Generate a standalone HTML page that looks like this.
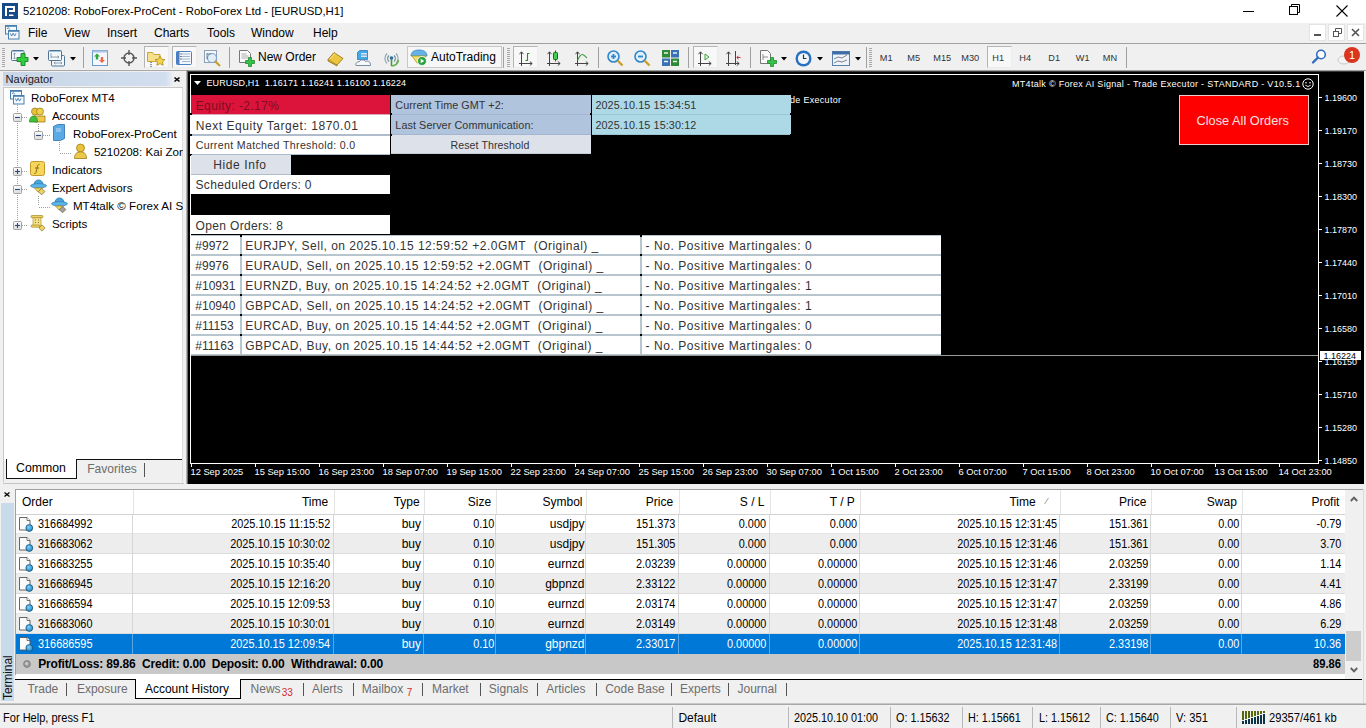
<!DOCTYPE html>
<html><head><meta charset="utf-8">
<style>
*{margin:0;padding:0;box-sizing:border-box}
html,body{width:1366px;height:728px;overflow:hidden;background:#f0f0f0;font-family:"Liberation Sans",sans-serif;font-size:12px;color:#000;position:relative}
.a{position:absolute}
.t{position:absolute;white-space:nowrap;line-height:1}
svg{position:absolute;overflow:visible}
</style></head><body>
<div class="a" style="left:0px;top:0px;width:1366px;height:23px;background:#fff;"></div>
<svg style="left:2px;top:3px" width="16" height="16" viewBox="0 0 16 16"><rect x="0" y="0" width="16" height="16" fill="#184a88"/><path d="M3 3h10v6H7V7h4V5H5v8H3z" fill="#fff"/><path d="M7 11.4h4l.8 1.6H7z" fill="#fff"/></svg>
<div class="t" style="left:23px;top:6.35px;font-size:11.4px;color:#000;">5210208: RoboForex-ProCent - RoboForex Ltd - [EURUSD,H1]</div>
<div class="a" style="left:1243px;top:11px;width:11px;height:1px;background:#000;"></div>
<svg style="left:1289px;top:4px" width="12" height="12" viewBox="0 0 12 12">
<rect x="0.5" y="2.5" width="8" height="8" fill="none" stroke="#000"/>
<path d="M2.5 2.5V0.5h8v8h-2" fill="none" stroke="#000"/></svg>
<svg style="left:1336px;top:5px" width="12" height="12" viewBox="0 0 12 12">
<path d="M0.5 0.5L11.5 11.5M11.5 0.5L0.5 11.5" stroke="#000" stroke-width="1.1"/></svg>
<div class="a" style="left:0px;top:23px;width:1366px;height:20px;background:#f0f0f0;"></div>
<div class="a" style="left:0px;top:43px;width:1366px;height:1px;background:#a0a0a0;"></div>
<svg style="left:5px;top:25px" width="15" height="15" viewBox="0 0 15 15"><rect x="0.5" y="0.5" width="11" height="8.5" fill="#f4f9fd" stroke="#4a7fae"/><path d="M0.5 1h11" stroke="#4a7fae" stroke-width="1.6"/><path d="M2 4l1.3-1.5 1.5 2" fill="none" stroke="#4a7fae" stroke-width="0.9"/><rect x="3.5" y="5.5" width="10.5" height="8.5" fill="#f4f9fd" stroke="#4a7fae"/><path d="M3.5 6h10.5" stroke="#4a7fae" stroke-width="1.6"/><path d="M5.3 8.3l1.3 2.8 1.5-3 1.5 3 1.4-2.8" fill="none" stroke="#4a7fae" stroke-width="0.9"/></svg>
<div class="t" style="left:28px;top:26.84px;font-size:12px;color:#000;">File</div>
<div class="t" style="left:64px;top:26.84px;font-size:12px;color:#000;">View</div>
<div class="t" style="left:107px;top:26.84px;font-size:12px;color:#000;">Insert</div>
<div class="t" style="left:154px;top:26.84px;font-size:12px;color:#000;">Charts</div>
<div class="t" style="left:207px;top:26.84px;font-size:12px;color:#000;">Tools</div>
<div class="t" style="left:251px;top:26.84px;font-size:12px;color:#000;">Window</div>
<div class="t" style="left:313px;top:26.84px;font-size:12px;color:#000;">Help</div>
<div class="a" style="left:1309px;top:24px;width:17px;height:17px;background:#fff;border:1px solid #e3e3e3"></div>
<div class="a" style="left:1328px;top:24px;width:17px;height:17px;background:#fff;border:1px solid #e3e3e3"></div>
<div class="a" style="left:1347px;top:24px;width:17px;height:17px;background:#fff;border:1px solid #e3e3e3"></div>
<div class="a" style="left:1314px;top:34px;width:7px;height:2px;background:#555;"></div>
<svg style="left:1333px;top:28px" width="9" height="9" viewBox="0 0 9 9">
<rect x="0.5" y="3.5" width="5" height="5" fill="none" stroke="#555"/>
<path d="M2.5 3.5V0.5h6v5h-3" fill="none" stroke="#555"/></svg>
<svg style="left:1351px;top:28px" width="9" height="9" viewBox="0 0 9 9">
<path d="M1 1L8 8M8 1L1 8" stroke="#555" stroke-width="1.6"/></svg>
<div class="a" style="left:0px;top:44px;width:1366px;height:26px;background:#f0f0f0;"></div>
<svg style="left:2px;top:48px" width="3" height="20"><rect x="0" y="0" width="3" height="1" fill="#a8a8a8"/><rect x="0" y="2" width="3" height="1" fill="#a8a8a8"/><rect x="0" y="4" width="3" height="1" fill="#a8a8a8"/><rect x="0" y="6" width="3" height="1" fill="#a8a8a8"/><rect x="0" y="8" width="3" height="1" fill="#a8a8a8"/><rect x="0" y="10" width="3" height="1" fill="#a8a8a8"/><rect x="0" y="12" width="3" height="1" fill="#a8a8a8"/><rect x="0" y="14" width="3" height="1" fill="#a8a8a8"/><rect x="0" y="16" width="3" height="1" fill="#a8a8a8"/><rect x="0" y="18" width="3" height="1" fill="#a8a8a8"/></svg>
<svg style="left:11px;top:50px" width="18" height="16" viewBox="0 0 18 16"><rect x="0.5" y="0.5" width="12.5" height="10" rx="1" fill="#f2f8fc" stroke="#4f7394"/><path d="M1 1.5h11.5" stroke="#9fc0dc"/><path d="M3.5 3v6M2.3 4.2l1.2-1.2 1.2 1.2M2.3 7.8l1.2 1.2 1.2-1.2" fill="none" stroke="#7a8a9a" stroke-width="0.8"/><path d="M10 3.5h4v4h3v4h-3v4h-4v-4H6v-4h4z" fill="#2fd040" stroke="#1a7a22" stroke-width="0.9"/></svg>
<svg style="left:33px;top:57px" width="6" height="4"><path d="M0 0h6L3 3.5z" fill="#000"/></svg>
<svg style="left:48px;top:50px" width="18" height="17" viewBox="0 0 18 17"><rect x="3.5" y="5.5" width="13" height="10.5" rx="1" fill="#f2f8fc" stroke="#4f7394"/><rect x="0.5" y="0.5" width="13" height="10" rx="1" fill="#f2f8fc" stroke="#4f7394"/><path d="M1 1.5h12" stroke="#9fc0dc"/><path d="M3 3v5M3 7h8M9.5 5.8l1.5 1.2-1.5 1.2M6 13h8M7.3 11.8L6 13l1.3 1.2M12.7 11.8L14 13l-1.3 1.2" fill="none" stroke="#7a8a9a" stroke-width="0.8"/></svg>
<svg style="left:70px;top:57px" width="6" height="4"><path d="M0 0h6L3 3.5z" fill="#000"/></svg>
<div class="a" style="left:83px;top:47px;width:1px;height:21px;background:#a0a0a0;"></div>
<svg style="left:92px;top:50px" width="16" height="16" viewBox="0 0 16 16"><rect x="0.5" y="0.5" width="15" height="15" fill="#f4f8fc" stroke="#6a9bd0"/><rect x="0.5" y="0.5" width="15" height="2" fill="#a9c6e6"/><path d="M5 3.5l3 3H6.2v3H3.8v-3H2z" fill="#2fa83a"/><path d="M10 13l3-3h-1.8V7H8.8v3H7z" fill="#e9694a"/></svg>
<svg style="left:121px;top:50px" width="16" height="16" viewBox="0 0 16 16"><circle cx="8" cy="8" r="5" fill="none" stroke="#555" stroke-width="1.4"/><path d="M8 0v5M8 11v5M0 8h5M11 8h5" stroke="#555" stroke-width="1.4"/></svg>
<div class="a" style="left:144px;top:46px;width:25px;height:22px;background:#f8f8f8;border-left:1px solid #b4b4b4;border-top:1px solid #b4b4b4;border-right:1px solid #ececec;border-bottom:1px solid #ececec"></div>
<svg style="left:147px;top:50px" width="19" height="17" viewBox="0 0 19 17"><path d="M0.5 2.5h5l1.5 2h6v7h-12.5z" fill="#f7e08c" stroke="#c9a53a"/><path d="M13 6l1.6 3.2 3.4.4-2.5 2.3.7 3.4-3.2-1.7-3.2 1.7.7-3.4-2.5-2.3 3.4-.4z" fill="#f2d54a" stroke="#b08a1a" stroke-width="0.8"/><path d="M4 12v5" stroke="#333" stroke-dasharray="1 1"/></svg>
<div class="a" style="left:172px;top:46px;width:25px;height:22px;background:#f8f8f8;border-left:1px solid #b4b4b4;border-top:1px solid #b4b4b4;border-right:1px solid #ececec;border-bottom:1px solid #ececec"></div>
<svg style="left:176px;top:51px" width="16" height="14" viewBox="0 0 16 14"><rect x="0.5" y="0.5" width="15" height="13" rx="1" fill="#f4f8fc" stroke="#4a7fc1"/><rect x="0.5" y="0.5" width="3" height="13" fill="#4a7fc1"/><path d="M6 3h8M6 5.5h8M6 8h8M6 10.5h8" stroke="#8aa6c8" stroke-width="0.8"/><path d="M4.5 3h1M4.5 5.5h1M4.5 8h1" stroke="#000"/></svg>
<svg style="left:204px;top:50px" width="18" height="18" viewBox="0 0 18 18"><rect x="0.5" y="0.5" width="12" height="12" fill="#f4f8fc" stroke="#8aa0b8"/><circle cx="8" cy="8" r="4.5" fill="#dce9f5" fill-opacity="0.7" stroke="#7ea3cc" stroke-width="1.2"/><path d="M11 11l5 5" stroke="#c9a030" stroke-width="2.2"/><path d="M3 3v6M3 4h4" stroke="#53677f" stroke-width="0.8"/></svg>
<div class="a" style="left:229px;top:47px;width:1px;height:21px;background:#a0a0a0;"></div>
<svg style="left:239px;top:50px" width="17" height="17" viewBox="0 0 17 17"><path d="M0.5 0.5h8l3 3v9h-11z" fill="#fafafa" stroke="#777"/><path d="M2.5 4h5M2.5 6h7M2.5 8h7" stroke="#999" stroke-width="0.8"/><path d="M10 8h3v3h3v3h-3v3h-3v-3H7v-3h3z" transform="translate(-0.5,-0.5)" fill="#36c24a" stroke="#1f8a2e" stroke-width="0.8"/></svg>
<div class="t" style="left:258px;top:50.84px;font-size:12px;color:#000;">New Order</div>
<svg style="left:327px;top:51px" width="17" height="15" viewBox="0 0 17 15"><path d="M1 8.5L7 1.5l9 6-6 6.5z" fill="#ecc640" stroke="#9a7a1a" stroke-width="0.9"/><path d="M1 8.5v1.5l9 5v-1" fill="#c8a028" stroke="#9a7a1a" stroke-width="0.8"/><path d="M3 8l5-5.5" stroke="#f8e08a" stroke-width="1"/></svg>
<svg style="left:355px;top:50px" width="17" height="16" viewBox="0 0 17 16"><path d="M2.5 2.5l2-2h8v9h-10z" fill="#47a8e8" stroke="#2a78c0" stroke-width="0.8"/><rect x="6" y="3" width="6" height="4" fill="#cfe8fb"/><path d="M6 5h6" stroke="#2a78c0" stroke-width="0.7"/><path d="M1 15.5c-1-2 1-4 3-3.5 1-2.5 5-3 6.5-.5 2-1 5.5 0 5 4z" fill="#f6f8fa" stroke="#6a7f98" stroke-width="0.9"/></svg>
<svg style="left:383px;top:50px" width="17" height="17" viewBox="0 0 17 17"><path d="M4 3.5A7 7 0 0 0 4 13.5M13 3.5A7 7 0 0 1 13 13.5" fill="none" stroke="#8aa0b0" stroke-width="1.1"/><path d="M6 5.5A4 4 0 0 0 6 11.5M11 5.5A4 4 0 0 1 11 11.5" fill="none" stroke="#6a8aa0" stroke-width="1.1"/><path d="M15.5 10A7.5 7.5 0 0 1 8.5 16" fill="none" stroke="#6ab04a" stroke-width="1.6"/><circle cx="8.5" cy="8" r="1.8" fill="#2c6f9a"/><path d="M8.5 9v7" stroke="#4a9a3a" stroke-width="1.6"/></svg>
<div class="a" style="left:407px;top:46px;width:95px;height:22px;background:#f7f7f7;border:1px solid #c8c8c8"></div>
<svg style="left:410px;top:49px" width="18" height="17" viewBox="0 0 18 17"><path d="M1 7c0-4 3-6 8-6s8 2 8 6z" fill="#63b3e8" stroke="#3f86c0" stroke-width="0.8"/><path d="M2 7h14l-5 7H7z" fill="#f3dd6b" stroke="#b39a2a" stroke-width="0.8"/><circle cx="12" cy="12" r="4.5" fill="#2aa040" stroke="#fff" stroke-width="0.8"/><path d="M10.7 9.8v4.4l3.6-2.2z" fill="#fff"/></svg>
<div class="t" style="left:431px;top:50.84px;font-size:12px;color:#000;">AutoTrading</div>
<div class="a" style="left:503px;top:47px;width:1px;height:21px;background:#a0a0a0;"></div>
<svg style="left:507px;top:48px" width="3" height="20"><rect x="0" y="0" width="3" height="1" fill="#a8a8a8"/><rect x="0" y="2" width="3" height="1" fill="#a8a8a8"/><rect x="0" y="4" width="3" height="1" fill="#a8a8a8"/><rect x="0" y="6" width="3" height="1" fill="#a8a8a8"/><rect x="0" y="8" width="3" height="1" fill="#a8a8a8"/><rect x="0" y="10" width="3" height="1" fill="#a8a8a8"/><rect x="0" y="12" width="3" height="1" fill="#a8a8a8"/><rect x="0" y="14" width="3" height="1" fill="#a8a8a8"/><rect x="0" y="16" width="3" height="1" fill="#a8a8a8"/><rect x="0" y="18" width="3" height="1" fill="#a8a8a8"/></svg>
<div class="a" style="left:513px;top:46px;width:25px;height:22px;background:#f8f8f8;border-left:1px solid #b4b4b4;border-top:1px solid #b4b4b4;border-right:1px solid #ececec;border-bottom:1px solid #ececec"></div>
<svg style="left:518px;top:50px" width="16" height="17" viewBox="0 0 16 17"><path d="M3.5 2v14M1 13.5h13" stroke="#444" stroke-width="1"/><path d="M1.5 4.2L3.5 1.8 5.5 4.2M11.8 11.5l2.4 2-2.4 2" fill="none" stroke="#444" stroke-width="1"/><path d="M9.5 3v8M7.5 10.5h2M9.5 3.5h2" stroke="#2a8a2a" stroke-width="1.1"/></svg>
<svg style="left:546px;top:50px" width="16" height="17" viewBox="0 0 16 17"><path d="M3.5 2v14M1 13.5h13" stroke="#444" stroke-width="1"/><path d="M1.5 4.2L3.5 1.8 5.5 4.2M11.8 11.5l2.4 2-2.4 2" fill="none" stroke="#444" stroke-width="1"/><path d="M9.5 0.5v11" stroke="#1a6a1a"/><rect x="7.5" y="2.5" width="4" height="7" rx="0.8" fill="#3ad050" stroke="#1a6a1a"/></svg>
<svg style="left:574px;top:50px" width="16" height="17" viewBox="0 0 16 17"><path d="M3.5 2v14M1 13.5h13" stroke="#444" stroke-width="1"/><path d="M1.5 4.2L3.5 1.8 5.5 4.2M11.8 11.5l2.4 2-2.4 2" fill="none" stroke="#444" stroke-width="1"/><path d="M3.5 10.5C5 7 7 4.5 8.5 4.5S11.5 7 13 8" fill="none" stroke="#3a9a3a" stroke-width="1.1"/></svg>
<div class="a" style="left:598px;top:47px;width:1px;height:21px;background:#a0a0a0;"></div>
<svg style="left:607px;top:50px" width="17" height="17" viewBox="0 0 17 17"><circle cx="6.5" cy="6.5" r="5.5" fill="#dff0fb" stroke="#2f86c8" stroke-width="1.6"/><path d="M10.5 10.5l5 5" stroke="#c9a030" stroke-width="2.4"/><path d="M4 6.5h5" stroke="#2f86c8" stroke-width="1.8"/><path d="M6.5 4v5" stroke="#2f86c8" stroke-width="1.8"/></svg>
<svg style="left:634px;top:50px" width="17" height="17" viewBox="0 0 17 17"><circle cx="6.5" cy="6.5" r="5.5" fill="#dff0fb" stroke="#2f86c8" stroke-width="1.6"/><path d="M10.5 10.5l5 5" stroke="#c9a030" stroke-width="2.4"/><path d="M4 6.5h5" stroke="#2f86c8" stroke-width="1.8"/></svg>
<svg style="left:662px;top:50px" width="17" height="16" viewBox="0 0 17 16"><rect x="0" y="0" width="8" height="7.5" fill="#2f8a3a"/><rect x="9" y="0" width="8" height="7.5" fill="#3a72b8"/><rect x="0" y="8.5" width="8" height="7.5" fill="#3a72b8"/><rect x="9" y="8.5" width="8" height="7.5" fill="#2f8a3a"/><path d="M2 3h4M11 3h4M2 11.5h4M11 11.5h4" stroke="#e8f4e8" stroke-width="1.4"/></svg>
<div class="a" style="left:688px;top:47px;width:1px;height:21px;background:#a0a0a0;"></div>
<div class="a" style="left:693px;top:46px;width:25px;height:22px;background:#f8f8f8;border-left:1px solid #b4b4b4;border-top:1px solid #b4b4b4;border-right:1px solid #ececec;border-bottom:1px solid #ececec"></div>
<svg style="left:697px;top:50px" width="16" height="17" viewBox="0 0 16 17"><path d="M3.5 2v14M1 13.5h13" stroke="#444" stroke-width="1"/><path d="M1.5 4.2L3.5 1.8 5.5 4.2M11.8 11.5l2.4 2-2.4 2" fill="none" stroke="#444" stroke-width="1"/><path d="M8 4v6l4-3z" fill="#e8f8e8" stroke="#2a9a2a" stroke-width="0.9"/></svg>
<svg style="left:725px;top:50px" width="16" height="17" viewBox="0 0 16 17"><path d="M3.5 2v14M1 13.5h13" stroke="#444" stroke-width="1"/><path d="M1.5 4.2L3.5 1.8 5.5 4.2M11.8 11.5l2.4 2-2.4 2" fill="none" stroke="#444" stroke-width="1"/><path d="M10.5 1v14" stroke="#444"/><path d="M15.5 7.5H12M13.5 5.8L11.8 7.5l1.7 1.7" fill="none" stroke="#c03030" stroke-width="1"/></svg>
<div class="a" style="left:750px;top:47px;width:1px;height:21px;background:#a0a0a0;"></div>
<svg style="left:760px;top:50px" width="17" height="17" viewBox="0 0 17 17"><path d="M0.5 0.5h7l3 3v10h-10z" fill="#fafafa" stroke="#777"/><path d="M3 4v6M3 7h5" stroke="#777" stroke-width="0.8"/><path d="M10 8h3v3h3v3h-3v3h-3v-3H7v-3h3z" transform="translate(0.5,-0.5)" fill="#36c24a" stroke="#1f8a2e" stroke-width="0.8"/></svg>
<svg style="left:781px;top:57px" width="6" height="4"><path d="M0 0h6L3 3.5z" fill="#000"/></svg>
<svg style="left:795px;top:50px" width="17" height="17" viewBox="0 0 17 17"><circle cx="8.5" cy="8.5" r="8" fill="#2a6fc0"/><circle cx="8.5" cy="8.5" r="5.6" fill="#f2f6fb"/><path d="M8.5 4.5v4h3" fill="none" stroke="#333" stroke-width="1.2"/></svg>
<svg style="left:817px;top:57px" width="6" height="4"><path d="M0 0h6L3 3.5z" fill="#000"/></svg>
<svg style="left:832px;top:51px" width="18" height="15" viewBox="0 0 18 15"><rect x="0.5" y="0.5" width="17" height="14" fill="#eef4fb" stroke="#5a7fa8"/><rect x="0.5" y="0.5" width="17" height="3" fill="#3f6fa8"/><path d="M2 8l4-2 4 1 5-3M2 12l4-2 4 1 5-2" fill="none" stroke="#666" stroke-width="0.8"/></svg>
<svg style="left:855px;top:57px" width="6" height="4"><path d="M0 0h6L3 3.5z" fill="#000"/></svg>
<div class="a" style="left:866px;top:47px;width:1px;height:21px;background:#a0a0a0;"></div>
<svg style="left:869px;top:48px" width="3" height="20"><rect x="0" y="0" width="3" height="1" fill="#a8a8a8"/><rect x="0" y="2" width="3" height="1" fill="#a8a8a8"/><rect x="0" y="4" width="3" height="1" fill="#a8a8a8"/><rect x="0" y="6" width="3" height="1" fill="#a8a8a8"/><rect x="0" y="8" width="3" height="1" fill="#a8a8a8"/><rect x="0" y="10" width="3" height="1" fill="#a8a8a8"/><rect x="0" y="12" width="3" height="1" fill="#a8a8a8"/><rect x="0" y="14" width="3" height="1" fill="#a8a8a8"/><rect x="0" y="16" width="3" height="1" fill="#a8a8a8"/><rect x="0" y="18" width="3" height="1" fill="#a8a8a8"/></svg>
<div class="t" style="left:879.8px;top:54.21px;font-size:9.2px;color:#333;">M1</div>
<div class="t" style="left:907.3px;top:54.21px;font-size:9.2px;color:#333;">M5</div>
<div class="t" style="left:933.3px;top:54.21px;font-size:9.2px;color:#333;">M15</div>
<div class="t" style="left:961.3px;top:54.21px;font-size:9.2px;color:#333;">M30</div>
<div class="t" style="left:1019.3px;top:54.21px;font-size:9.2px;color:#333;">H4</div>
<div class="t" style="left:1048.3px;top:54.21px;font-size:9.2px;color:#333;">D1</div>
<div class="t" style="left:1075.8px;top:54.21px;font-size:9.2px;color:#333;">W1</div>
<div class="t" style="left:1102.8px;top:54.21px;font-size:9.2px;color:#333;">MN</div>
<div class="a" style="left:987px;top:46px;width:25px;height:22px;background:#f8f8f8;border-left:1px solid #b4b4b4;border-top:1px solid #b4b4b4;border-right:1px solid #ececec;border-bottom:1px solid #ececec"></div>
<div class="t" style="left:992.3px;top:54.21px;font-size:9.2px;color:#333;">H1</div>
<div class="a" style="left:1126px;top:47px;width:1px;height:21px;background:#a0a0a0;"></div>
<svg style="left:1312px;top:49px" width="15" height="15" viewBox="0 0 15 15"><circle cx="9" cy="5.5" r="4.3" fill="#fff" stroke="#2f6cc0" stroke-width="1.6"/><path d="M6 8.5L1 13.5" stroke="#2f6cc0" stroke-width="2.4" stroke-linecap="round"/></svg>
<svg style="left:1336px;top:46px" width="26" height="20" viewBox="0 0 26 20"><ellipse cx="8" cy="14" rx="6" ry="4" fill="#f4f4f4" stroke="#c8c8c8"/><circle cx="16" cy="9" r="8" fill="#d9351f"/><text x="16" y="13" font-size="11" font-family="Liberation Sans" fill="#fff" text-anchor="middle">1</text></svg>
<div class="a" style="left:0px;top:70px;width:1366px;height:1px;background:#a8a8a8;"></div>
<div class="a" style="left:0px;top:71px;width:188px;height:413px;background:#f0f0f0;"></div>
<div class="a" style="left:3px;top:72px;width:181px;height:14px;background:linear-gradient(to right,#c9d6e6 0%,#cfdcec 60%,#d2def0 90%,#eef0f2 94%,#f0f0f0 100%)"></div>
<div class="t" style="left:5.5px;top:73.60px;font-size:11.1px;color:#1a1a1a;">Navigator</div>
<svg style="left:174px;top:77px" width="6" height="5" viewBox="0 0 6 5"><path d="M0.5 0.5l5 4M5.5 0.5l-5 4" stroke="#000" stroke-width="1.6"/></svg>
<div class="a" style="left:3px;top:87px;width:180px;height:395px;background:#fff;border:1px solid #c8c8c8;border-right:1px solid #dcdcdc"></div>
<svg style="left:17px;top:105px" width="1" height="117"><rect x="0" y="0" width="1" height="1" fill="#a0a0a0"/><rect x="0" y="2" width="1" height="1" fill="#a0a0a0"/><rect x="0" y="4" width="1" height="1" fill="#a0a0a0"/><rect x="0" y="6" width="1" height="1" fill="#a0a0a0"/><rect x="0" y="8" width="1" height="1" fill="#a0a0a0"/><rect x="0" y="10" width="1" height="1" fill="#a0a0a0"/><rect x="0" y="12" width="1" height="1" fill="#a0a0a0"/><rect x="0" y="14" width="1" height="1" fill="#a0a0a0"/><rect x="0" y="16" width="1" height="1" fill="#a0a0a0"/><rect x="0" y="18" width="1" height="1" fill="#a0a0a0"/><rect x="0" y="20" width="1" height="1" fill="#a0a0a0"/><rect x="0" y="22" width="1" height="1" fill="#a0a0a0"/><rect x="0" y="24" width="1" height="1" fill="#a0a0a0"/><rect x="0" y="26" width="1" height="1" fill="#a0a0a0"/><rect x="0" y="28" width="1" height="1" fill="#a0a0a0"/><rect x="0" y="30" width="1" height="1" fill="#a0a0a0"/><rect x="0" y="32" width="1" height="1" fill="#a0a0a0"/><rect x="0" y="34" width="1" height="1" fill="#a0a0a0"/><rect x="0" y="36" width="1" height="1" fill="#a0a0a0"/><rect x="0" y="38" width="1" height="1" fill="#a0a0a0"/><rect x="0" y="40" width="1" height="1" fill="#a0a0a0"/><rect x="0" y="42" width="1" height="1" fill="#a0a0a0"/><rect x="0" y="44" width="1" height="1" fill="#a0a0a0"/><rect x="0" y="46" width="1" height="1" fill="#a0a0a0"/><rect x="0" y="48" width="1" height="1" fill="#a0a0a0"/><rect x="0" y="50" width="1" height="1" fill="#a0a0a0"/><rect x="0" y="52" width="1" height="1" fill="#a0a0a0"/><rect x="0" y="54" width="1" height="1" fill="#a0a0a0"/><rect x="0" y="56" width="1" height="1" fill="#a0a0a0"/><rect x="0" y="58" width="1" height="1" fill="#a0a0a0"/><rect x="0" y="60" width="1" height="1" fill="#a0a0a0"/><rect x="0" y="62" width="1" height="1" fill="#a0a0a0"/><rect x="0" y="64" width="1" height="1" fill="#a0a0a0"/><rect x="0" y="66" width="1" height="1" fill="#a0a0a0"/><rect x="0" y="68" width="1" height="1" fill="#a0a0a0"/><rect x="0" y="70" width="1" height="1" fill="#a0a0a0"/><rect x="0" y="72" width="1" height="1" fill="#a0a0a0"/><rect x="0" y="74" width="1" height="1" fill="#a0a0a0"/><rect x="0" y="76" width="1" height="1" fill="#a0a0a0"/><rect x="0" y="78" width="1" height="1" fill="#a0a0a0"/><rect x="0" y="80" width="1" height="1" fill="#a0a0a0"/><rect x="0" y="82" width="1" height="1" fill="#a0a0a0"/><rect x="0" y="84" width="1" height="1" fill="#a0a0a0"/><rect x="0" y="86" width="1" height="1" fill="#a0a0a0"/><rect x="0" y="88" width="1" height="1" fill="#a0a0a0"/><rect x="0" y="90" width="1" height="1" fill="#a0a0a0"/><rect x="0" y="92" width="1" height="1" fill="#a0a0a0"/><rect x="0" y="94" width="1" height="1" fill="#a0a0a0"/><rect x="0" y="96" width="1" height="1" fill="#a0a0a0"/><rect x="0" y="98" width="1" height="1" fill="#a0a0a0"/><rect x="0" y="100" width="1" height="1" fill="#a0a0a0"/><rect x="0" y="102" width="1" height="1" fill="#a0a0a0"/><rect x="0" y="104" width="1" height="1" fill="#a0a0a0"/><rect x="0" y="106" width="1" height="1" fill="#a0a0a0"/><rect x="0" y="108" width="1" height="1" fill="#a0a0a0"/><rect x="0" y="110" width="1" height="1" fill="#a0a0a0"/><rect x="0" y="112" width="1" height="1" fill="#a0a0a0"/><rect x="0" y="114" width="1" height="1" fill="#a0a0a0"/><rect x="0" y="116" width="1" height="1" fill="#a0a0a0"/></svg>
<svg style="left:38px;top:124px" width="1" height="11"><rect x="0" y="0" width="1" height="1" fill="#a0a0a0"/><rect x="0" y="2" width="1" height="1" fill="#a0a0a0"/><rect x="0" y="4" width="1" height="1" fill="#a0a0a0"/><rect x="0" y="6" width="1" height="1" fill="#a0a0a0"/><rect x="0" y="8" width="1" height="1" fill="#a0a0a0"/><rect x="0" y="10" width="1" height="1" fill="#a0a0a0"/></svg>
<svg style="left:59px;top:142px" width="1" height="10"><rect x="0" y="0" width="1" height="1" fill="#a0a0a0"/><rect x="0" y="2" width="1" height="1" fill="#a0a0a0"/><rect x="0" y="4" width="1" height="1" fill="#a0a0a0"/><rect x="0" y="6" width="1" height="1" fill="#a0a0a0"/><rect x="0" y="8" width="1" height="1" fill="#a0a0a0"/></svg>
<svg style="left:38px;top:196px" width="1" height="10"><rect x="0" y="0" width="1" height="1" fill="#a0a0a0"/><rect x="0" y="2" width="1" height="1" fill="#a0a0a0"/><rect x="0" y="4" width="1" height="1" fill="#a0a0a0"/><rect x="0" y="6" width="1" height="1" fill="#a0a0a0"/><rect x="0" y="8" width="1" height="1" fill="#a0a0a0"/></svg>
<svg style="left:22px;top:117px" width="6" height="1"><rect x="0" y="0" width="1" height="1" fill="#a0a0a0"/><rect x="2" y="0" width="1" height="1" fill="#a0a0a0"/><rect x="4" y="0" width="1" height="1" fill="#a0a0a0"/></svg>
<svg style="left:22px;top:171px" width="6" height="1"><rect x="0" y="0" width="1" height="1" fill="#a0a0a0"/><rect x="2" y="0" width="1" height="1" fill="#a0a0a0"/><rect x="4" y="0" width="1" height="1" fill="#a0a0a0"/></svg>
<svg style="left:22px;top:189px" width="6" height="1"><rect x="0" y="0" width="1" height="1" fill="#a0a0a0"/><rect x="2" y="0" width="1" height="1" fill="#a0a0a0"/><rect x="4" y="0" width="1" height="1" fill="#a0a0a0"/></svg>
<svg style="left:22px;top:225px" width="6" height="1"><rect x="0" y="0" width="1" height="1" fill="#a0a0a0"/><rect x="2" y="0" width="1" height="1" fill="#a0a0a0"/><rect x="4" y="0" width="1" height="1" fill="#a0a0a0"/></svg>
<svg style="left:43px;top:135px" width="7" height="1"><rect x="0" y="0" width="1" height="1" fill="#a0a0a0"/><rect x="2" y="0" width="1" height="1" fill="#a0a0a0"/><rect x="4" y="0" width="1" height="1" fill="#a0a0a0"/><rect x="6" y="0" width="1" height="1" fill="#a0a0a0"/></svg>
<svg style="left:60px;top:153px" width="12" height="1"><rect x="0" y="0" width="1" height="1" fill="#a0a0a0"/><rect x="2" y="0" width="1" height="1" fill="#a0a0a0"/><rect x="4" y="0" width="1" height="1" fill="#a0a0a0"/><rect x="6" y="0" width="1" height="1" fill="#a0a0a0"/><rect x="8" y="0" width="1" height="1" fill="#a0a0a0"/><rect x="10" y="0" width="1" height="1" fill="#a0a0a0"/></svg>
<svg style="left:39px;top:207px" width="11" height="1"><rect x="0" y="0" width="1" height="1" fill="#a0a0a0"/><rect x="2" y="0" width="1" height="1" fill="#a0a0a0"/><rect x="4" y="0" width="1" height="1" fill="#a0a0a0"/><rect x="6" y="0" width="1" height="1" fill="#a0a0a0"/><rect x="8" y="0" width="1" height="1" fill="#a0a0a0"/><rect x="10" y="0" width="1" height="1" fill="#a0a0a0"/></svg>
<svg style="left:13px;top:113px" width="9" height="9" viewBox="0 0 9 9"><defs><linearGradient id="bxg" x1="0" y1="0" x2="0" y2="1"><stop offset="0" stop-color="#fdfdfd"/><stop offset="1" stop-color="#dcdcdc"/></linearGradient></defs><rect x="0.5" y="0.5" width="8" height="8" rx="1" fill="url(#bxg)" stroke="#a0a0a0"/><path d="M2 4.5h5" stroke="#2a4a80" stroke-width="1.1"/></svg>
<svg style="left:34px;top:131px" width="9" height="9" viewBox="0 0 9 9"><defs><linearGradient id="bxg" x1="0" y1="0" x2="0" y2="1"><stop offset="0" stop-color="#fdfdfd"/><stop offset="1" stop-color="#dcdcdc"/></linearGradient></defs><rect x="0.5" y="0.5" width="8" height="8" rx="1" fill="url(#bxg)" stroke="#a0a0a0"/><path d="M2 4.5h5" stroke="#2a4a80" stroke-width="1.1"/></svg>
<svg style="left:13px;top:167px" width="9" height="9" viewBox="0 0 9 9"><defs><linearGradient id="bxg" x1="0" y1="0" x2="0" y2="1"><stop offset="0" stop-color="#fdfdfd"/><stop offset="1" stop-color="#dcdcdc"/></linearGradient></defs><rect x="0.5" y="0.5" width="8" height="8" rx="1" fill="url(#bxg)" stroke="#a0a0a0"/><path d="M2 4.5h5" stroke="#2a4a80" stroke-width="1.1"/><path d="M4.5 2v5" stroke="#2a4a80" stroke-width="1.1"/></svg>
<svg style="left:13px;top:185px" width="9" height="9" viewBox="0 0 9 9"><defs><linearGradient id="bxg" x1="0" y1="0" x2="0" y2="1"><stop offset="0" stop-color="#fdfdfd"/><stop offset="1" stop-color="#dcdcdc"/></linearGradient></defs><rect x="0.5" y="0.5" width="8" height="8" rx="1" fill="url(#bxg)" stroke="#a0a0a0"/><path d="M2 4.5h5" stroke="#2a4a80" stroke-width="1.1"/></svg>
<svg style="left:13px;top:221px" width="9" height="9" viewBox="0 0 9 9"><defs><linearGradient id="bxg" x1="0" y1="0" x2="0" y2="1"><stop offset="0" stop-color="#fdfdfd"/><stop offset="1" stop-color="#dcdcdc"/></linearGradient></defs><rect x="0.5" y="0.5" width="8" height="8" rx="1" fill="url(#bxg)" stroke="#a0a0a0"/><path d="M2 4.5h5" stroke="#2a4a80" stroke-width="1.1"/><path d="M4.5 2v5" stroke="#2a4a80" stroke-width="1.1"/></svg>
<svg style="left:10px;top:90px" width="15" height="15" viewBox="0 0 15 15"><rect x="0.5" y="0.5" width="11" height="8.5" fill="#f4f9fd" stroke="#4a7fae"/><path d="M0.5 1h11" stroke="#4a7fae" stroke-width="1.6"/><path d="M2 4l1.3-1.5 1.5 2" fill="none" stroke="#4a7fae" stroke-width="0.9"/><rect x="3.5" y="5.5" width="10.5" height="8.5" fill="#f4f9fd" stroke="#4a7fae"/><path d="M3.5 6h10.5" stroke="#4a7fae" stroke-width="1.6"/><path d="M5.3 8.3l1.3 2.8 1.5-3 1.5 3 1.4-2.8" fill="none" stroke="#4a7fae" stroke-width="0.9"/></svg>
<svg style="left:29px;top:107px" width="17" height="16" viewBox="0 0 17 16"><circle cx="6" cy="4.5" r="3.5" fill="#e9c23c" stroke="#a07d1a" stroke-width="0.8"/><circle cx="11" cy="4.5" r="3.5" fill="#f0cf4a" stroke="#a07d1a" stroke-width="0.8"/><path d="M5 9h11v6H5z" fill="#edc94a" stroke="#a07d1a" stroke-width="0.8"/><path d="M0.5 15c0-4 2-6 4-6s4 2 4 6z" fill="#3fbf3a" stroke="#2a8a20" stroke-width="0.8"/></svg>
<svg style="left:53px;top:124px" width="12" height="17" viewBox="0 0 12 17"><path d="M0.5 2.5l4-2h7v14l-4 2h-7z" fill="#5aaae6" stroke="#2c6fb0" stroke-width="0.8"/><path d="M3 5h5M3 7h5" stroke="#d8ecfb" stroke-width="0.8"/></svg>
<svg style="left:74px;top:143px" width="13" height="16" viewBox="0 0 13 16"><circle cx="6.5" cy="5" r="4" fill="#e9c23c" stroke="#a07d1a" stroke-width="0.8"/><path d="M0.5 15.5c0-5 2.5-6.5 6-6.5s6 1.5 6 6.5z" fill="#edc94a" stroke="#a07d1a" stroke-width="0.8"/></svg>
<svg style="left:30px;top:161px" width="15" height="15" viewBox="0 0 15 15"><rect x="0.5" y="0.5" width="14" height="14" rx="2" fill="#f5d65a" stroke="#c39a2a"/><path d="M9.5 3.5c-2 0-2 1-2.5 4l-1 4c-.3 1-1 1.2-1.8 1M5 7h4" fill="none" stroke="#8a6a10" stroke-width="1"/></svg>
<svg style="left:30px;top:179px" width="17" height="17" viewBox="0 0 17 17"><path d="M4 6.5C4 2.5 6 1 8.5 1S13 2.5 13 6.5z" fill="#4aa6dc" stroke="#2a78b0" stroke-width="0.8"/><ellipse cx="8.5" cy="6.8" rx="8" ry="2.2" fill="#5ab4e6" stroke="#2a78b0" stroke-width="0.7"/><path d="M4.5 9h8l-3.5 4h-1z" fill="#f0d35a" stroke="#a08a2a" stroke-width="0.7"/><rect x="9.3" y="10.3" width="4.6" height="4.6" transform="rotate(45 11.6 12.6)" fill="#f2d35a" stroke="#6a6a4a" stroke-width="0.7"/></svg>
<svg style="left:51px;top:197px" width="17" height="17" viewBox="0 0 17 17"><path d="M4 6.5C4 2.5 6 1 8.5 1S13 2.5 13 6.5z" fill="#4aa6dc" stroke="#2a78b0" stroke-width="0.8"/><ellipse cx="8.5" cy="6.8" rx="8" ry="2.2" fill="#5ab4e6" stroke="#2a78b0" stroke-width="0.7"/><path d="M4.5 9h8l-3.5 4h-1z" fill="#f0d35a" stroke="#a08a2a" stroke-width="0.7"/><rect x="9.3" y="10.3" width="4.6" height="4.6" transform="rotate(45 11.6 12.6)" fill="#a0a0a0" stroke="#6a6a4a" stroke-width="0.7"/></svg>
<svg style="left:30px;top:215px" width="16" height="17" viewBox="0 0 16 17"><path d="M3 2h8v9H3z" fill="#f5e08a" stroke="#b39a2a" stroke-width="0.7"/><rect x="1" y="0.5" width="12" height="2.2" rx="1" fill="#f0d060" stroke="#a08a2a" stroke-width="0.7"/><rect x="1" y="10" width="9" height="2.2" rx="1" fill="#f0d060" stroke="#a08a2a" stroke-width="0.7"/><path d="M5 5h1M8 5h1M5 7.5h1M8 7.5h1" stroke="#8a7a3a"/><rect x="9.8" y="10.8" width="4.4" height="4.4" transform="rotate(45 12 13)" fill="#f2d35a" stroke="#8a7a3a" stroke-width="0.7"/></svg>
<div class="a" style="left:4px;top:88px;width:179px;height:150px;overflow:hidden">
<div class="t" style="left:27.0px;top:3.54px;font-size:11.6px;color:#000">RoboForex MT4</div>
<div class="t" style="left:47.9px;top:21.54px;font-size:11.6px;color:#000">Accounts</div>
<div class="t" style="left:68.9px;top:39.54px;font-size:11.6px;color:#000">RoboForex-ProCent</div>
<div class="t" style="left:89.9px;top:57.54px;font-size:11.6px;color:#000">5210208: Kai Zong</div>
<div class="t" style="left:47.9px;top:75.54px;font-size:11.6px;color:#000">Indicators</div>
<div class="t" style="left:47.9px;top:93.54px;font-size:11.6px;color:#000">Expert Advisors</div>
<div class="t" style="left:68.9px;top:111.54px;font-size:11.6px;color:#000">MT4talk &copy; Forex AI Signal</div>
<div class="t" style="left:47.9px;top:129.54px;font-size:11.6px;color:#000">Scripts</div>
</div>
<div class="a" style="left:4px;top:460px;width:178px;height:23px;background:#f0f0f0;"></div>
<div class="a" style="left:76px;top:459px;width:106px;height:1px;background:#111;"></div>
<div class="a" style="left:6px;top:459px;width:71px;height:20px;background:#fff;border:1px solid #111;border-top:none;border-width:0 1.5px 1.5px 1.5px"></div>
<div class="t" style="left:16px;top:462.39px;font-size:12.3px;color:#000;">Common</div>
<div class="t" style="left:87.2px;top:462.56px;font-size:12.1px;color:#6d6d6d;">Favorites</div>
<div class="a" style="left:144px;top:463px;width:1px;height:14px;background:#555;"></div>
<div class="a" style="left:3px;top:483px;width:181px;height:1px;background:#c4c4c4;"></div>
<div class="a" style="left:186px;top:70px;width:1180px;height:1px;background:#a0a0a0;"></div>
<div class="a" style="left:186px;top:70px;width:1px;height:414px;background:#b0b0b0;"></div>
<div class="a" style="left:187px;top:70px;width:1px;height:414px;background:#6a6a6a;"></div>
<div class="a" style="left:188px;top:71px;width:1176px;height:413px;background:#000;"></div>
<div class="a" style="left:188px;top:71px;width:1176px;height:1px;background:#3a3a3a;"></div>
<div class="a" style="left:190px;top:74px;width:1129px;height:1px;background:#fff;"></div>
<div class="a" style="left:190px;top:74px;width:1px;height:390px;background:#fff;"></div>
<div class="a" style="left:190px;top:463px;width:1129px;height:1px;background:#fff;"></div>
<div class="a" style="left:1318px;top:74px;width:1px;height:390px;background:#fff;"></div>
<div class="a" style="left:1319px;top:97px;width:3px;height:1px;background:#fff;"></div>
<div class="t" style="left:1324.5px;top:93.88px;font-size:9px;color:#fff;">1.19600</div>
<div class="a" style="left:1319px;top:130px;width:3px;height:1px;background:#fff;"></div>
<div class="t" style="left:1324.5px;top:126.88px;font-size:9px;color:#fff;">1.19170</div>
<div class="a" style="left:1319px;top:163px;width:3px;height:1px;background:#fff;"></div>
<div class="t" style="left:1324.5px;top:159.88px;font-size:9px;color:#fff;">1.18730</div>
<div class="a" style="left:1319px;top:196px;width:3px;height:1px;background:#fff;"></div>
<div class="t" style="left:1324.5px;top:192.88px;font-size:9px;color:#fff;">1.18300</div>
<div class="a" style="left:1319px;top:229px;width:3px;height:1px;background:#fff;"></div>
<div class="t" style="left:1324.5px;top:225.88px;font-size:9px;color:#fff;">1.17870</div>
<div class="a" style="left:1319px;top:262px;width:3px;height:1px;background:#fff;"></div>
<div class="t" style="left:1324.5px;top:258.88px;font-size:9px;color:#fff;">1.17440</div>
<div class="a" style="left:1319px;top:295px;width:3px;height:1px;background:#fff;"></div>
<div class="t" style="left:1324.5px;top:291.88px;font-size:9px;color:#fff;">1.17010</div>
<div class="a" style="left:1319px;top:328px;width:3px;height:1px;background:#fff;"></div>
<div class="t" style="left:1324.5px;top:324.88px;font-size:9px;color:#fff;">1.16580</div>
<div class="a" style="left:1319px;top:361px;width:3px;height:1px;background:#fff;"></div>
<div class="t" style="left:1324.5px;top:357.88px;font-size:9px;color:#fff;">1.16150</div>
<div class="a" style="left:1319px;top:394px;width:3px;height:1px;background:#fff;"></div>
<div class="t" style="left:1324.5px;top:390.88px;font-size:9px;color:#fff;">1.15710</div>
<div class="a" style="left:1319px;top:427px;width:3px;height:1px;background:#fff;"></div>
<div class="t" style="left:1324.5px;top:423.88px;font-size:9px;color:#fff;">1.15280</div>
<div class="a" style="left:1319px;top:460px;width:3px;height:1px;background:#fff;"></div>
<div class="t" style="left:1324.5px;top:456.88px;font-size:9px;color:#fff;">1.14850</div>
<div class="a" style="left:191px;top:355px;width:1127px;height:1px;background:#9a9a9a;"></div>
<div class="a" style="left:1320px;top:351px;width:41px;height:9px;background:#fff;"></div>
<div class="t" style="left:1323.5px;top:351.98px;font-size:9px;color:#000;">1.16224</div>
<div class="a" style="left:191px;top:464px;width:1px;height:3px;background:#fff;"></div>
<div class="t" style="left:190.5px;top:468.43px;font-size:9.3px;color:#fff;">12 Sep 2025</div>
<div class="a" style="left:255px;top:464px;width:1px;height:3px;background:#fff;"></div>
<div class="t" style="left:254.5px;top:468.43px;font-size:9.3px;color:#fff;">15 Sep 15:00</div>
<div class="a" style="left:319px;top:464px;width:1px;height:3px;background:#fff;"></div>
<div class="t" style="left:318.5px;top:468.43px;font-size:9.3px;color:#fff;">16 Sep 23:00</div>
<div class="a" style="left:383px;top:464px;width:1px;height:3px;background:#fff;"></div>
<div class="t" style="left:382.5px;top:468.43px;font-size:9.3px;color:#fff;">18 Sep 07:00</div>
<div class="a" style="left:447px;top:464px;width:1px;height:3px;background:#fff;"></div>
<div class="t" style="left:446.5px;top:468.43px;font-size:9.3px;color:#fff;">19 Sep 15:00</div>
<div class="a" style="left:511px;top:464px;width:1px;height:3px;background:#fff;"></div>
<div class="t" style="left:510.5px;top:468.43px;font-size:9.3px;color:#fff;">22 Sep 23:00</div>
<div class="a" style="left:575px;top:464px;width:1px;height:3px;background:#fff;"></div>
<div class="t" style="left:574.5px;top:468.43px;font-size:9.3px;color:#fff;">24 Sep 07:00</div>
<div class="a" style="left:639px;top:464px;width:1px;height:3px;background:#fff;"></div>
<div class="t" style="left:638.5px;top:468.43px;font-size:9.3px;color:#fff;">25 Sep 15:00</div>
<div class="a" style="left:703px;top:464px;width:1px;height:3px;background:#fff;"></div>
<div class="t" style="left:702.5px;top:468.43px;font-size:9.3px;color:#fff;">26 Sep 23:00</div>
<div class="a" style="left:767px;top:464px;width:1px;height:3px;background:#fff;"></div>
<div class="t" style="left:766.5px;top:468.43px;font-size:9.3px;color:#fff;">30 Sep 07:00</div>
<div class="a" style="left:831px;top:464px;width:1px;height:3px;background:#fff;"></div>
<div class="t" style="left:830.5px;top:468.43px;font-size:9.3px;color:#fff;">1 Oct 15:00</div>
<div class="a" style="left:895px;top:464px;width:1px;height:3px;background:#fff;"></div>
<div class="t" style="left:894.5px;top:468.43px;font-size:9.3px;color:#fff;">2 Oct 23:00</div>
<div class="a" style="left:959px;top:464px;width:1px;height:3px;background:#fff;"></div>
<div class="t" style="left:958.5px;top:468.43px;font-size:9.3px;color:#fff;">6 Oct 07:00</div>
<div class="a" style="left:1023px;top:464px;width:1px;height:3px;background:#fff;"></div>
<div class="t" style="left:1022.5px;top:468.43px;font-size:9.3px;color:#fff;">7 Oct 15:00</div>
<div class="a" style="left:1087px;top:464px;width:1px;height:3px;background:#fff;"></div>
<div class="t" style="left:1086.5px;top:468.43px;font-size:9.3px;color:#fff;">8 Oct 23:00</div>
<div class="a" style="left:1151px;top:464px;width:1px;height:3px;background:#fff;"></div>
<div class="t" style="left:1150.5px;top:468.43px;font-size:9.3px;color:#fff;">10 Oct 07:00</div>
<div class="a" style="left:1215px;top:464px;width:1px;height:3px;background:#fff;"></div>
<div class="t" style="left:1214.5px;top:468.43px;font-size:9.3px;color:#fff;">13 Oct 15:00</div>
<div class="a" style="left:1279px;top:464px;width:1px;height:3px;background:#fff;"></div>
<div class="t" style="left:1278.5px;top:468.43px;font-size:9.3px;color:#fff;">14 Oct 23:00</div>
<svg style="left:194px;top:81px" width="7" height="4" viewBox="0 0 7 4"><path d="M0 0h7L3.5 4z" fill="#fff"/></svg>
<div class="t" style="left:206.5px;top:78.88px;font-size:9px;color:#fff;letter-spacing:0.12px">EURUSD,H1&nbsp; 1.16171 1.16241 1.16100 1.16224</div>
<div class="t" style="left:1012px;top:79.78px;font-size:9px;color:#fff;letter-spacing:0.3px">MT4talk &copy; Forex AI Signal - Trade Executor - STANDARD - V10.5.1</div>
<svg style="left:1302px;top:78px" width="12" height="12" viewBox="0 0 12 12"><circle cx="6" cy="6" r="5.2" fill="none" stroke="#fff" stroke-width="1"/><circle cx="4" cy="4.8" r="0.8" fill="#fff"/><circle cx="8" cy="4.8" r="0.8" fill="#fff"/><path d="M3.3 7.2q2.7 2.6 5.4 0" fill="none" stroke="#fff" stroke-width="0.9"/></svg>
<div class="t" style="left:790px;top:96.18px;font-size:9px;color:#fff;letter-spacing:0.3px">de Executor</div>
<div class="a" style="left:1179px;top:95px;width:130px;height:50px;background:#ff0000;border:1px solid #f0c8c8"></div>
<div class="t" style="left:1196.5px;top:114.96px;font-size:12.8px;color:#f4e0e0;">Close All Orders</div>
<div class="a" style="left:191px;top:95px;width:199px;height:19px;background:#dc143c;"></div>
<div class="t" style="left:195.7px;top:99.74px;font-size:12px;color:#7a0f1f;letter-spacing:0.4px">Equity: -2.17%</div>
<div class="a" style="left:191px;top:114px;width:199px;height:22px;background:#fff;border-top:1px solid #d8a8b4;border-bottom:2px solid #aebccb"></div>
<div class="t" style="left:195.7px;top:119.74px;font-size:12px;color:#333;letter-spacing:0.55px">Next Equity Target: 1870.01</div>
<div class="a" style="left:191px;top:136px;width:199px;height:19px;background:#fff;border-bottom:1px solid #aebccb"></div>
<div class="t" style="left:195.7px;top:139.83px;font-size:10.6px;color:#333;letter-spacing:0.35px">Current Matched Threshold: 0.0</div>
<div class="a" style="left:391px;top:95px;width:200px;height:19px;background:#b0c4de;"></div>
<div class="a" style="left:391px;top:114px;width:200px;height:21px;background:#b0c4de;border-top:1px solid #a4b6cf;border-bottom:1px solid #a4b6cf"></div>
<div class="t" style="left:395.3px;top:99.86px;font-size:10.8px;color:#333;letter-spacing:0.05px">Current Time GMT +2:</div>
<div class="t" style="left:395.3px;top:119.56px;font-size:10.8px;color:#333;letter-spacing:0.08px">Last Server Communication:</div>
<div class="a" style="left:391px;top:135px;width:200px;height:19px;background:#dde1ea;border-bottom:1px solid #c8ccd6"></div>
<div class="t" style="left:450.4px;top:139.83px;font-size:10.6px;color:#333;letter-spacing:0.1px">Reset Threshold</div>
<div class="a" style="left:592px;top:95px;width:199px;height:19px;background:#add8e6;"></div>
<div class="a" style="left:592px;top:114px;width:199px;height:21px;background:#add8e6;border-top:1px solid #9cc4d4;border-bottom:1px solid #9cc4d4"></div>
<div class="t" style="left:595.4px;top:99.86px;font-size:10.8px;color:#333;letter-spacing:0.1px">2025.10.15 15:34:51</div>
<div class="t" style="left:595.4px;top:119.56px;font-size:10.8px;color:#333;letter-spacing:0.1px">2025.10.15 15:30:12</div>
<div class="a" style="left:190px;top:113px;width:2px;height:2px;background:#000;"></div>
<div class="a" style="left:390px;top:113px;width:2px;height:2px;background:#000;"></div>
<div class="a" style="left:590px;top:113px;width:2px;height:2px;background:#000;"></div>
<div class="a" style="left:190px;top:134px;width:2px;height:2px;background:#000;"></div>
<div class="a" style="left:390px;top:134px;width:2px;height:2px;background:#000;"></div>
<div class="a" style="left:790px;top:113px;width:2px;height:2px;background:#000;"></div>
<div class="a" style="left:790px;top:134px;width:2px;height:2px;background:#000;"></div>
<div class="a" style="left:190px;top:154px;width:2px;height:2px;background:#000;"></div>
<div class="a" style="left:191px;top:155px;width:100px;height:20px;background:#dde1ea;border-bottom:1px solid #aebccb"></div>
<div class="t" style="left:213.2px;top:159.44px;font-size:12px;color:#333;letter-spacing:0.6px">Hide Info</div>
<div class="a" style="left:191px;top:175px;width:199px;height:19px;background:#fff;"></div>
<div class="t" style="left:195.5px;top:179.34px;font-size:12px;color:#333;letter-spacing:0.33px">Scheduled Orders: 0</div>
<div class="a" style="left:191px;top:215px;width:199px;height:19px;background:#fff;"></div>
<div class="t" style="left:195.5px;top:219.54px;font-size:12px;color:#333;letter-spacing:0.36px">Open Orders: 8</div>
<div class="a" style="left:191px;top:235px;width:750px;height:20px;background:#fff;"></div>
<div class="a" style="left:191px;top:235px;width:750px;height:1px;background:#b6c5ce;"></div>
<div class="a" style="left:240px;top:235px;width:2px;height:20px;background:#b6c5ce;"></div>
<div class="a" style="left:640px;top:235px;width:2px;height:20px;background:#b6c5ce;"></div>
<div class="a" style="left:240px;top:235px;width:2px;height:2px;background:#000;"></div>
<div class="a" style="left:640px;top:235px;width:2px;height:2px;background:#000;"></div>
<div class="t" style="left:195.2px;top:239.64px;font-size:12px;color:#333;letter-spacing:0.05px">#9972</div>
<div class="t" style="left:245.3px;top:239.64px;font-size:12px;color:#333;letter-spacing:0.48px">EURJPY, Sell, on 2025.10.15 12:59:52 +2.0GMT&nbsp; (Original) _</div>
<div class="t" style="left:645.4px;top:239.64px;font-size:12px;color:#333;letter-spacing:0.58px">- No. Positive Martingales: 0</div>
<div class="a" style="left:191px;top:255px;width:750px;height:20px;background:#fff;"></div>
<div class="a" style="left:191px;top:254px;width:750px;height:2px;background:#b6c5ce;"></div>
<div class="a" style="left:240px;top:255px;width:2px;height:20px;background:#b6c5ce;"></div>
<div class="a" style="left:640px;top:255px;width:2px;height:20px;background:#b6c5ce;"></div>
<div class="a" style="left:240px;top:254px;width:2px;height:2px;background:#000;"></div>
<div class="a" style="left:640px;top:254px;width:2px;height:2px;background:#000;"></div>
<div class="t" style="left:195.2px;top:259.64px;font-size:12px;color:#333;letter-spacing:0.05px">#9976</div>
<div class="t" style="left:245.3px;top:259.64px;font-size:12px;color:#333;letter-spacing:0.48px">EURAUD, Sell, on 2025.10.15 12:59:52 +2.0GMT&nbsp; (Original) _</div>
<div class="t" style="left:645.4px;top:259.64px;font-size:12px;color:#333;letter-spacing:0.58px">- No. Positive Martingales: 0</div>
<div class="a" style="left:191px;top:275px;width:750px;height:20px;background:#fff;"></div>
<div class="a" style="left:191px;top:274px;width:750px;height:2px;background:#b6c5ce;"></div>
<div class="a" style="left:240px;top:275px;width:2px;height:20px;background:#b6c5ce;"></div>
<div class="a" style="left:640px;top:275px;width:2px;height:20px;background:#b6c5ce;"></div>
<div class="a" style="left:240px;top:274px;width:2px;height:2px;background:#000;"></div>
<div class="a" style="left:640px;top:274px;width:2px;height:2px;background:#000;"></div>
<div class="t" style="left:195.2px;top:279.64px;font-size:12px;color:#333;letter-spacing:0.05px">#10931</div>
<div class="t" style="left:245.3px;top:279.64px;font-size:12px;color:#333;letter-spacing:0.48px">EURNZD, Buy, on 2025.10.15 14:24:52 +2.0GMT&nbsp; (Original) _</div>
<div class="t" style="left:645.4px;top:279.64px;font-size:12px;color:#333;letter-spacing:0.58px">- No. Positive Martingales: 1</div>
<div class="a" style="left:191px;top:295px;width:750px;height:20px;background:#fff;"></div>
<div class="a" style="left:191px;top:294px;width:750px;height:2px;background:#b6c5ce;"></div>
<div class="a" style="left:240px;top:295px;width:2px;height:20px;background:#b6c5ce;"></div>
<div class="a" style="left:640px;top:295px;width:2px;height:20px;background:#b6c5ce;"></div>
<div class="a" style="left:240px;top:294px;width:2px;height:2px;background:#000;"></div>
<div class="a" style="left:640px;top:294px;width:2px;height:2px;background:#000;"></div>
<div class="t" style="left:195.2px;top:299.64px;font-size:12px;color:#333;letter-spacing:0.05px">#10940</div>
<div class="t" style="left:245.3px;top:299.64px;font-size:12px;color:#333;letter-spacing:0.48px">GBPCAD, Sell, on 2025.10.15 14:24:52 +2.0GMT&nbsp; (Original) _</div>
<div class="t" style="left:645.4px;top:299.64px;font-size:12px;color:#333;letter-spacing:0.58px">- No. Positive Martingales: 1</div>
<div class="a" style="left:191px;top:315px;width:750px;height:20px;background:#fff;"></div>
<div class="a" style="left:191px;top:314px;width:750px;height:2px;background:#b6c5ce;"></div>
<div class="a" style="left:240px;top:315px;width:2px;height:20px;background:#b6c5ce;"></div>
<div class="a" style="left:640px;top:315px;width:2px;height:20px;background:#b6c5ce;"></div>
<div class="a" style="left:240px;top:314px;width:2px;height:2px;background:#000;"></div>
<div class="a" style="left:640px;top:314px;width:2px;height:2px;background:#000;"></div>
<div class="t" style="left:195.2px;top:319.64px;font-size:12px;color:#333;letter-spacing:0.05px">#11153</div>
<div class="t" style="left:245.3px;top:319.64px;font-size:12px;color:#333;letter-spacing:0.48px">EURCAD, Buy, on 2025.10.15 14:44:52 +2.0GMT&nbsp; (Original) _</div>
<div class="t" style="left:645.4px;top:319.64px;font-size:12px;color:#333;letter-spacing:0.58px">- No. Positive Martingales: 0</div>
<div class="a" style="left:191px;top:335px;width:750px;height:20px;background:#fff;"></div>
<div class="a" style="left:191px;top:334px;width:750px;height:2px;background:#b6c5ce;"></div>
<div class="a" style="left:240px;top:335px;width:2px;height:20px;background:#b6c5ce;"></div>
<div class="a" style="left:640px;top:335px;width:2px;height:20px;background:#b6c5ce;"></div>
<div class="a" style="left:240px;top:334px;width:2px;height:2px;background:#000;"></div>
<div class="a" style="left:640px;top:334px;width:2px;height:2px;background:#000;"></div>
<div class="t" style="left:195.2px;top:339.64px;font-size:12px;color:#333;letter-spacing:0.05px">#11163</div>
<div class="t" style="left:245.3px;top:339.64px;font-size:12px;color:#333;letter-spacing:0.48px">GBPCAD, Buy, on 2025.10.15 14:44:52 +2.0GMT&nbsp; (Original) _</div>
<div class="t" style="left:645.4px;top:339.64px;font-size:12px;color:#333;letter-spacing:0.58px">- No. Positive Martingales: 0</div>
<div class="a" style="left:191px;top:354px;width:750px;height:1px;background:#b6c5ce;"></div>
<div class="a" style="left:0px;top:484px;width:1366px;height:5px;background:#f0f0f0;"></div>
<div class="a" style="left:0px;top:489px;width:1366px;height:216px;background:#f0f0f0;"></div>
<svg style="left:4px;top:492px" width="6" height="5" viewBox="0 0 6 5"><path d="M0.5 0.5l5 4M5.5 0.5l-5 4" stroke="#000" stroke-width="1.3"/></svg>
<div class="a" style="left:1px;top:503px;width:13px;height:198px;background:#c9daea;"></div>
<div class="t" style="left:1.5px;top:700px;font-size:12px;color:#111;transform:rotate(-90deg);transform-origin:0 0;letter-spacing:-0.1px">Terminal</div>
<div class="a" style="left:15px;top:489px;width:1348px;height:1px;background:#a0a0a0;"></div>
<div class="a" style="left:15px;top:489px;width:1px;height:186px;background:#a0a0a0;"></div>
<div class="a" style="left:16px;top:490px;width:1329px;height:24px;background:#fff;"></div>
<div class="a" style="left:133px;top:490px;width:1px;height:24px;background:#e3e3e3;"></div>
<div class="a" style="left:334px;top:490px;width:1px;height:24px;background:#e3e3e3;"></div>
<div class="a" style="left:424px;top:490px;width:1px;height:24px;background:#e3e3e3;"></div>
<div class="a" style="left:496px;top:490px;width:1px;height:24px;background:#e3e3e3;"></div>
<div class="a" style="left:586px;top:490px;width:1px;height:24px;background:#e3e3e3;"></div>
<div class="a" style="left:679px;top:490px;width:1px;height:24px;background:#e3e3e3;"></div>
<div class="a" style="left:770px;top:490px;width:1px;height:24px;background:#e3e3e3;"></div>
<div class="a" style="left:860px;top:490px;width:1px;height:24px;background:#e3e3e3;"></div>
<div class="a" style="left:1060px;top:490px;width:1px;height:24px;background:#e3e3e3;"></div>
<div class="a" style="left:1151px;top:490px;width:1px;height:24px;background:#e3e3e3;"></div>
<div class="a" style="left:1242px;top:490px;width:1px;height:24px;background:#e3e3e3;"></div>
<div class="t" style="left:22.0px;top:495.64px;font-size:12px;color:#000;">Order</div>
<div class="t" style="right:1037.8px;top:495.64px;font-size:12px;color:#000;">Time</div>
<div class="t" style="right:946.3px;top:495.64px;font-size:12px;color:#000;">Type</div>
<div class="t" style="right:874.9px;top:495.64px;font-size:12px;color:#000;">Size</div>
<div class="t" style="right:783.5px;top:495.64px;font-size:12px;color:#000;">Symbol</div>
<div class="t" style="right:692.9px;top:495.64px;font-size:12px;color:#000;">Price</div>
<div class="t" style="right:601.5px;top:495.64px;font-size:12px;color:#000;">S / L</div>
<div class="t" style="right:511.19999999999993px;top:495.64px;font-size:12px;color:#000;">T / P</div>
<div class="t" style="right:330.4000000000001px;top:495.64px;font-size:12px;color:#000;">Time</div>
<div class="t" style="right:219.60000000000014px;top:495.64px;font-size:12px;color:#000;">Price</div>
<div class="t" style="right:129.20000000000005px;top:495.64px;font-size:12px;color:#000;">Swap</div>
<div class="t" style="right:26.600000000000136px;top:495.64px;font-size:12px;color:#000;">Profit</div>
<div class="t" style="left:1046px;top:497.38px;font-size:9px;color:#777;">&#8260;</div>
<div class="a" style="left:16px;top:514px;width:1329px;height:20px;background:#fff;"></div>
<div class="a" style="left:16px;top:533px;width:1329px;height:1px;background:#e6e6e6;"></div>
<div class="a" style="left:132px;top:514px;width:1px;height:20px;background:#d6d6d6;"></div>
<div class="a" style="left:333px;top:514px;width:1px;height:20px;background:#d6d6d6;"></div>
<div class="a" style="left:423px;top:514px;width:1px;height:20px;background:#d6d6d6;"></div>
<div class="a" style="left:495px;top:514px;width:1px;height:20px;background:#d6d6d6;"></div>
<div class="a" style="left:585px;top:514px;width:1px;height:20px;background:#d6d6d6;"></div>
<div class="a" style="left:678px;top:514px;width:1px;height:20px;background:#d6d6d6;"></div>
<div class="a" style="left:769px;top:514px;width:1px;height:20px;background:#d6d6d6;"></div>
<div class="a" style="left:859px;top:514px;width:1px;height:20px;background:#d6d6d6;"></div>
<div class="a" style="left:1059px;top:514px;width:1px;height:20px;background:#d6d6d6;"></div>
<div class="a" style="left:1150px;top:514px;width:1px;height:20px;background:#d6d6d6;"></div>
<div class="a" style="left:1241px;top:514px;width:1px;height:20px;background:#d6d6d6;"></div>
<svg style="left:19px;top:517px" width="15" height="15" viewBox="0 0 15 15"><defs><radialGradient id="bg0" cx="0.4" cy="0.35" r="0.7"><stop offset="0" stop-color="#7fd0f8"/><stop offset="1" stop-color="#1a86c8"/></radialGradient></defs><path d="M0.5 0.5h7.5l3 3v9.5h-10.5z" fill="#fafafa" stroke="#555" stroke-width="0.9"/><path d="M8 0.5v3h3" fill="#fff" stroke="#555" stroke-width="0.8"/><circle cx="10.3" cy="11" r="3.4" fill="url(#bg0)" stroke="#15507a" stroke-width="0.8"/></svg>
<div class="t" style="left:37.5px;top:517.74px;font-size:12px;color:#000;transform:scaleX(0.907);transform-origin:0 0">316684992</div>
<div class="t" style="right:1035.5px;top:517.74px;font-size:12px;color:#000;transform:scaleX(0.907);transform-origin:100% 0">2025.10.15 11:15:52</div>
<div class="t" style="right:945px;top:517.74px;font-size:12px;color:#000;">buy</div>
<div class="t" style="right:872px;top:517.74px;font-size:12px;color:#000;transform:scaleX(0.907);transform-origin:100% 0">0.10</div>
<div class="t" style="right:781.5px;top:517.74px;font-size:12px;color:#000;">usdjpy</div>
<div class="t" style="right:691px;top:517.74px;font-size:12px;color:#000;transform:scaleX(0.907);transform-origin:100% 0">151.373</div>
<div class="t" style="right:599.5px;top:517.74px;font-size:12px;color:#000;transform:scaleX(0.907);transform-origin:100% 0">0.000</div>
<div class="t" style="right:508.5px;top:517.74px;font-size:12px;color:#000;transform:scaleX(0.907);transform-origin:100% 0">0.000</div>
<div class="t" style="right:308.5px;top:517.74px;font-size:12px;color:#000;transform:scaleX(0.907);transform-origin:100% 0">2025.10.15 12:31:45</div>
<div class="t" style="right:218px;top:517.74px;font-size:12px;color:#000;transform:scaleX(0.907);transform-origin:100% 0">151.361</div>
<div class="t" style="right:126.5px;top:517.74px;font-size:12px;color:#000;transform:scaleX(0.907);transform-origin:100% 0">0.00</div>
<div class="t" style="right:24.5px;top:517.74px;font-size:12px;color:#000;transform:scaleX(0.907);transform-origin:100% 0">-0.79</div>
<div class="a" style="left:16px;top:534px;width:1329px;height:20px;background:#ededed;"></div>
<div class="a" style="left:16px;top:553px;width:1329px;height:1px;background:#dcdcdc;"></div>
<div class="a" style="left:132px;top:534px;width:1px;height:20px;background:#d6d6d6;"></div>
<div class="a" style="left:333px;top:534px;width:1px;height:20px;background:#d6d6d6;"></div>
<div class="a" style="left:423px;top:534px;width:1px;height:20px;background:#d6d6d6;"></div>
<div class="a" style="left:495px;top:534px;width:1px;height:20px;background:#d6d6d6;"></div>
<div class="a" style="left:585px;top:534px;width:1px;height:20px;background:#d6d6d6;"></div>
<div class="a" style="left:678px;top:534px;width:1px;height:20px;background:#d6d6d6;"></div>
<div class="a" style="left:769px;top:534px;width:1px;height:20px;background:#d6d6d6;"></div>
<div class="a" style="left:859px;top:534px;width:1px;height:20px;background:#d6d6d6;"></div>
<div class="a" style="left:1059px;top:534px;width:1px;height:20px;background:#d6d6d6;"></div>
<div class="a" style="left:1150px;top:534px;width:1px;height:20px;background:#d6d6d6;"></div>
<div class="a" style="left:1241px;top:534px;width:1px;height:20px;background:#d6d6d6;"></div>
<svg style="left:19px;top:537px" width="15" height="15" viewBox="0 0 15 15"><defs><radialGradient id="bg1" cx="0.4" cy="0.35" r="0.7"><stop offset="0" stop-color="#7fd0f8"/><stop offset="1" stop-color="#1a86c8"/></radialGradient></defs><path d="M0.5 0.5h7.5l3 3v9.5h-10.5z" fill="#fafafa" stroke="#555" stroke-width="0.9"/><path d="M8 0.5v3h3" fill="#fff" stroke="#555" stroke-width="0.8"/><circle cx="10.3" cy="11" r="3.4" fill="url(#bg1)" stroke="#15507a" stroke-width="0.8"/></svg>
<div class="t" style="left:37.5px;top:537.74px;font-size:12px;color:#000;transform:scaleX(0.907);transform-origin:0 0">316683062</div>
<div class="t" style="right:1035.5px;top:537.74px;font-size:12px;color:#000;transform:scaleX(0.907);transform-origin:100% 0">2025.10.15 10:30:02</div>
<div class="t" style="right:945px;top:537.74px;font-size:12px;color:#000;">buy</div>
<div class="t" style="right:872px;top:537.74px;font-size:12px;color:#000;transform:scaleX(0.907);transform-origin:100% 0">0.10</div>
<div class="t" style="right:781.5px;top:537.74px;font-size:12px;color:#000;">usdjpy</div>
<div class="t" style="right:691px;top:537.74px;font-size:12px;color:#000;transform:scaleX(0.907);transform-origin:100% 0">151.305</div>
<div class="t" style="right:599.5px;top:537.74px;font-size:12px;color:#000;transform:scaleX(0.907);transform-origin:100% 0">0.000</div>
<div class="t" style="right:508.5px;top:537.74px;font-size:12px;color:#000;transform:scaleX(0.907);transform-origin:100% 0">0.000</div>
<div class="t" style="right:308.5px;top:537.74px;font-size:12px;color:#000;transform:scaleX(0.907);transform-origin:100% 0">2025.10.15 12:31:46</div>
<div class="t" style="right:218px;top:537.74px;font-size:12px;color:#000;transform:scaleX(0.907);transform-origin:100% 0">151.361</div>
<div class="t" style="right:126.5px;top:537.74px;font-size:12px;color:#000;transform:scaleX(0.907);transform-origin:100% 0">0.00</div>
<div class="t" style="right:24.5px;top:537.74px;font-size:12px;color:#000;transform:scaleX(0.907);transform-origin:100% 0">3.70</div>
<div class="a" style="left:16px;top:554px;width:1329px;height:20px;background:#fff;"></div>
<div class="a" style="left:16px;top:573px;width:1329px;height:1px;background:#e6e6e6;"></div>
<div class="a" style="left:132px;top:554px;width:1px;height:20px;background:#d6d6d6;"></div>
<div class="a" style="left:333px;top:554px;width:1px;height:20px;background:#d6d6d6;"></div>
<div class="a" style="left:423px;top:554px;width:1px;height:20px;background:#d6d6d6;"></div>
<div class="a" style="left:495px;top:554px;width:1px;height:20px;background:#d6d6d6;"></div>
<div class="a" style="left:585px;top:554px;width:1px;height:20px;background:#d6d6d6;"></div>
<div class="a" style="left:678px;top:554px;width:1px;height:20px;background:#d6d6d6;"></div>
<div class="a" style="left:769px;top:554px;width:1px;height:20px;background:#d6d6d6;"></div>
<div class="a" style="left:859px;top:554px;width:1px;height:20px;background:#d6d6d6;"></div>
<div class="a" style="left:1059px;top:554px;width:1px;height:20px;background:#d6d6d6;"></div>
<div class="a" style="left:1150px;top:554px;width:1px;height:20px;background:#d6d6d6;"></div>
<div class="a" style="left:1241px;top:554px;width:1px;height:20px;background:#d6d6d6;"></div>
<svg style="left:19px;top:557px" width="15" height="15" viewBox="0 0 15 15"><defs><radialGradient id="bg2" cx="0.4" cy="0.35" r="0.7"><stop offset="0" stop-color="#7fd0f8"/><stop offset="1" stop-color="#1a86c8"/></radialGradient></defs><path d="M0.5 0.5h7.5l3 3v9.5h-10.5z" fill="#fafafa" stroke="#555" stroke-width="0.9"/><path d="M8 0.5v3h3" fill="#fff" stroke="#555" stroke-width="0.8"/><circle cx="10.3" cy="11" r="3.4" fill="url(#bg2)" stroke="#15507a" stroke-width="0.8"/></svg>
<div class="t" style="left:37.5px;top:557.74px;font-size:12px;color:#000;transform:scaleX(0.907);transform-origin:0 0">316683255</div>
<div class="t" style="right:1035.5px;top:557.74px;font-size:12px;color:#000;transform:scaleX(0.907);transform-origin:100% 0">2025.10.15 10:35:40</div>
<div class="t" style="right:945px;top:557.74px;font-size:12px;color:#000;">buy</div>
<div class="t" style="right:872px;top:557.74px;font-size:12px;color:#000;transform:scaleX(0.907);transform-origin:100% 0">0.10</div>
<div class="t" style="right:781.5px;top:557.74px;font-size:12px;color:#000;">eurnzd</div>
<div class="t" style="right:691px;top:557.74px;font-size:12px;color:#000;transform:scaleX(0.907);transform-origin:100% 0">2.03239</div>
<div class="t" style="right:599.5px;top:557.74px;font-size:12px;color:#000;transform:scaleX(0.907);transform-origin:100% 0">0.00000</div>
<div class="t" style="right:508.5px;top:557.74px;font-size:12px;color:#000;transform:scaleX(0.907);transform-origin:100% 0">0.00000</div>
<div class="t" style="right:308.5px;top:557.74px;font-size:12px;color:#000;transform:scaleX(0.907);transform-origin:100% 0">2025.10.15 12:31:46</div>
<div class="t" style="right:218px;top:557.74px;font-size:12px;color:#000;transform:scaleX(0.907);transform-origin:100% 0">2.03259</div>
<div class="t" style="right:126.5px;top:557.74px;font-size:12px;color:#000;transform:scaleX(0.907);transform-origin:100% 0">0.00</div>
<div class="t" style="right:24.5px;top:557.74px;font-size:12px;color:#000;transform:scaleX(0.907);transform-origin:100% 0">1.14</div>
<div class="a" style="left:16px;top:574px;width:1329px;height:20px;background:#ededed;"></div>
<div class="a" style="left:16px;top:593px;width:1329px;height:1px;background:#dcdcdc;"></div>
<div class="a" style="left:132px;top:574px;width:1px;height:20px;background:#d6d6d6;"></div>
<div class="a" style="left:333px;top:574px;width:1px;height:20px;background:#d6d6d6;"></div>
<div class="a" style="left:423px;top:574px;width:1px;height:20px;background:#d6d6d6;"></div>
<div class="a" style="left:495px;top:574px;width:1px;height:20px;background:#d6d6d6;"></div>
<div class="a" style="left:585px;top:574px;width:1px;height:20px;background:#d6d6d6;"></div>
<div class="a" style="left:678px;top:574px;width:1px;height:20px;background:#d6d6d6;"></div>
<div class="a" style="left:769px;top:574px;width:1px;height:20px;background:#d6d6d6;"></div>
<div class="a" style="left:859px;top:574px;width:1px;height:20px;background:#d6d6d6;"></div>
<div class="a" style="left:1059px;top:574px;width:1px;height:20px;background:#d6d6d6;"></div>
<div class="a" style="left:1150px;top:574px;width:1px;height:20px;background:#d6d6d6;"></div>
<div class="a" style="left:1241px;top:574px;width:1px;height:20px;background:#d6d6d6;"></div>
<svg style="left:19px;top:577px" width="15" height="15" viewBox="0 0 15 15"><defs><radialGradient id="bg3" cx="0.4" cy="0.35" r="0.7"><stop offset="0" stop-color="#7fd0f8"/><stop offset="1" stop-color="#1a86c8"/></radialGradient></defs><path d="M0.5 0.5h7.5l3 3v9.5h-10.5z" fill="#fafafa" stroke="#555" stroke-width="0.9"/><path d="M8 0.5v3h3" fill="#fff" stroke="#555" stroke-width="0.8"/><circle cx="10.3" cy="11" r="3.4" fill="url(#bg3)" stroke="#15507a" stroke-width="0.8"/></svg>
<div class="t" style="left:37.5px;top:577.74px;font-size:12px;color:#000;transform:scaleX(0.907);transform-origin:0 0">316686945</div>
<div class="t" style="right:1035.5px;top:577.74px;font-size:12px;color:#000;transform:scaleX(0.907);transform-origin:100% 0">2025.10.15 12:16:20</div>
<div class="t" style="right:945px;top:577.74px;font-size:12px;color:#000;">buy</div>
<div class="t" style="right:872px;top:577.74px;font-size:12px;color:#000;transform:scaleX(0.907);transform-origin:100% 0">0.10</div>
<div class="t" style="right:781.5px;top:577.74px;font-size:12px;color:#000;">gbpnzd</div>
<div class="t" style="right:691px;top:577.74px;font-size:12px;color:#000;transform:scaleX(0.907);transform-origin:100% 0">2.33122</div>
<div class="t" style="right:599.5px;top:577.74px;font-size:12px;color:#000;transform:scaleX(0.907);transform-origin:100% 0">0.00000</div>
<div class="t" style="right:508.5px;top:577.74px;font-size:12px;color:#000;transform:scaleX(0.907);transform-origin:100% 0">0.00000</div>
<div class="t" style="right:308.5px;top:577.74px;font-size:12px;color:#000;transform:scaleX(0.907);transform-origin:100% 0">2025.10.15 12:31:47</div>
<div class="t" style="right:218px;top:577.74px;font-size:12px;color:#000;transform:scaleX(0.907);transform-origin:100% 0">2.33199</div>
<div class="t" style="right:126.5px;top:577.74px;font-size:12px;color:#000;transform:scaleX(0.907);transform-origin:100% 0">0.00</div>
<div class="t" style="right:24.5px;top:577.74px;font-size:12px;color:#000;transform:scaleX(0.907);transform-origin:100% 0">4.41</div>
<div class="a" style="left:16px;top:594px;width:1329px;height:20px;background:#fff;"></div>
<div class="a" style="left:16px;top:613px;width:1329px;height:1px;background:#e6e6e6;"></div>
<div class="a" style="left:132px;top:594px;width:1px;height:20px;background:#d6d6d6;"></div>
<div class="a" style="left:333px;top:594px;width:1px;height:20px;background:#d6d6d6;"></div>
<div class="a" style="left:423px;top:594px;width:1px;height:20px;background:#d6d6d6;"></div>
<div class="a" style="left:495px;top:594px;width:1px;height:20px;background:#d6d6d6;"></div>
<div class="a" style="left:585px;top:594px;width:1px;height:20px;background:#d6d6d6;"></div>
<div class="a" style="left:678px;top:594px;width:1px;height:20px;background:#d6d6d6;"></div>
<div class="a" style="left:769px;top:594px;width:1px;height:20px;background:#d6d6d6;"></div>
<div class="a" style="left:859px;top:594px;width:1px;height:20px;background:#d6d6d6;"></div>
<div class="a" style="left:1059px;top:594px;width:1px;height:20px;background:#d6d6d6;"></div>
<div class="a" style="left:1150px;top:594px;width:1px;height:20px;background:#d6d6d6;"></div>
<div class="a" style="left:1241px;top:594px;width:1px;height:20px;background:#d6d6d6;"></div>
<svg style="left:19px;top:597px" width="15" height="15" viewBox="0 0 15 15"><defs><radialGradient id="bg4" cx="0.4" cy="0.35" r="0.7"><stop offset="0" stop-color="#7fd0f8"/><stop offset="1" stop-color="#1a86c8"/></radialGradient></defs><path d="M0.5 0.5h7.5l3 3v9.5h-10.5z" fill="#fafafa" stroke="#555" stroke-width="0.9"/><path d="M8 0.5v3h3" fill="#fff" stroke="#555" stroke-width="0.8"/><circle cx="10.3" cy="11" r="3.4" fill="url(#bg4)" stroke="#15507a" stroke-width="0.8"/></svg>
<div class="t" style="left:37.5px;top:597.74px;font-size:12px;color:#000;transform:scaleX(0.907);transform-origin:0 0">316686594</div>
<div class="t" style="right:1035.5px;top:597.74px;font-size:12px;color:#000;transform:scaleX(0.907);transform-origin:100% 0">2025.10.15 12:09:53</div>
<div class="t" style="right:945px;top:597.74px;font-size:12px;color:#000;">buy</div>
<div class="t" style="right:872px;top:597.74px;font-size:12px;color:#000;transform:scaleX(0.907);transform-origin:100% 0">0.10</div>
<div class="t" style="right:781.5px;top:597.74px;font-size:12px;color:#000;">eurnzd</div>
<div class="t" style="right:691px;top:597.74px;font-size:12px;color:#000;transform:scaleX(0.907);transform-origin:100% 0">2.03174</div>
<div class="t" style="right:599.5px;top:597.74px;font-size:12px;color:#000;transform:scaleX(0.907);transform-origin:100% 0">0.00000</div>
<div class="t" style="right:508.5px;top:597.74px;font-size:12px;color:#000;transform:scaleX(0.907);transform-origin:100% 0">0.00000</div>
<div class="t" style="right:308.5px;top:597.74px;font-size:12px;color:#000;transform:scaleX(0.907);transform-origin:100% 0">2025.10.15 12:31:47</div>
<div class="t" style="right:218px;top:597.74px;font-size:12px;color:#000;transform:scaleX(0.907);transform-origin:100% 0">2.03259</div>
<div class="t" style="right:126.5px;top:597.74px;font-size:12px;color:#000;transform:scaleX(0.907);transform-origin:100% 0">0.00</div>
<div class="t" style="right:24.5px;top:597.74px;font-size:12px;color:#000;transform:scaleX(0.907);transform-origin:100% 0">4.86</div>
<div class="a" style="left:16px;top:614px;width:1329px;height:20px;background:#ededed;"></div>
<div class="a" style="left:16px;top:633px;width:1329px;height:1px;background:#dcdcdc;"></div>
<div class="a" style="left:132px;top:614px;width:1px;height:20px;background:#d6d6d6;"></div>
<div class="a" style="left:333px;top:614px;width:1px;height:20px;background:#d6d6d6;"></div>
<div class="a" style="left:423px;top:614px;width:1px;height:20px;background:#d6d6d6;"></div>
<div class="a" style="left:495px;top:614px;width:1px;height:20px;background:#d6d6d6;"></div>
<div class="a" style="left:585px;top:614px;width:1px;height:20px;background:#d6d6d6;"></div>
<div class="a" style="left:678px;top:614px;width:1px;height:20px;background:#d6d6d6;"></div>
<div class="a" style="left:769px;top:614px;width:1px;height:20px;background:#d6d6d6;"></div>
<div class="a" style="left:859px;top:614px;width:1px;height:20px;background:#d6d6d6;"></div>
<div class="a" style="left:1059px;top:614px;width:1px;height:20px;background:#d6d6d6;"></div>
<div class="a" style="left:1150px;top:614px;width:1px;height:20px;background:#d6d6d6;"></div>
<div class="a" style="left:1241px;top:614px;width:1px;height:20px;background:#d6d6d6;"></div>
<svg style="left:19px;top:617px" width="15" height="15" viewBox="0 0 15 15"><defs><radialGradient id="bg5" cx="0.4" cy="0.35" r="0.7"><stop offset="0" stop-color="#7fd0f8"/><stop offset="1" stop-color="#1a86c8"/></radialGradient></defs><path d="M0.5 0.5h7.5l3 3v9.5h-10.5z" fill="#fafafa" stroke="#555" stroke-width="0.9"/><path d="M8 0.5v3h3" fill="#fff" stroke="#555" stroke-width="0.8"/><circle cx="10.3" cy="11" r="3.4" fill="url(#bg5)" stroke="#15507a" stroke-width="0.8"/></svg>
<div class="t" style="left:37.5px;top:617.74px;font-size:12px;color:#000;transform:scaleX(0.907);transform-origin:0 0">316683060</div>
<div class="t" style="right:1035.5px;top:617.74px;font-size:12px;color:#000;transform:scaleX(0.907);transform-origin:100% 0">2025.10.15 10:30:01</div>
<div class="t" style="right:945px;top:617.74px;font-size:12px;color:#000;">buy</div>
<div class="t" style="right:872px;top:617.74px;font-size:12px;color:#000;transform:scaleX(0.907);transform-origin:100% 0">0.10</div>
<div class="t" style="right:781.5px;top:617.74px;font-size:12px;color:#000;">eurnzd</div>
<div class="t" style="right:691px;top:617.74px;font-size:12px;color:#000;transform:scaleX(0.907);transform-origin:100% 0">2.03149</div>
<div class="t" style="right:599.5px;top:617.74px;font-size:12px;color:#000;transform:scaleX(0.907);transform-origin:100% 0">0.00000</div>
<div class="t" style="right:508.5px;top:617.74px;font-size:12px;color:#000;transform:scaleX(0.907);transform-origin:100% 0">0.00000</div>
<div class="t" style="right:308.5px;top:617.74px;font-size:12px;color:#000;transform:scaleX(0.907);transform-origin:100% 0">2025.10.15 12:31:48</div>
<div class="t" style="right:218px;top:617.74px;font-size:12px;color:#000;transform:scaleX(0.907);transform-origin:100% 0">2.03259</div>
<div class="t" style="right:126.5px;top:617.74px;font-size:12px;color:#000;transform:scaleX(0.907);transform-origin:100% 0">0.00</div>
<div class="t" style="right:24.5px;top:617.74px;font-size:12px;color:#000;transform:scaleX(0.907);transform-origin:100% 0">6.29</div>
<div class="a" style="left:16px;top:634px;width:1329px;height:20px;background:#0078d7;"></div>
<div class="a" style="left:132px;top:634px;width:1px;height:20px;background:#58a8e8;"></div>
<div class="a" style="left:333px;top:634px;width:1px;height:20px;background:#58a8e8;"></div>
<div class="a" style="left:423px;top:634px;width:1px;height:20px;background:#58a8e8;"></div>
<div class="a" style="left:495px;top:634px;width:1px;height:20px;background:#58a8e8;"></div>
<div class="a" style="left:585px;top:634px;width:1px;height:20px;background:#58a8e8;"></div>
<div class="a" style="left:678px;top:634px;width:1px;height:20px;background:#58a8e8;"></div>
<div class="a" style="left:769px;top:634px;width:1px;height:20px;background:#58a8e8;"></div>
<div class="a" style="left:859px;top:634px;width:1px;height:20px;background:#58a8e8;"></div>
<div class="a" style="left:1059px;top:634px;width:1px;height:20px;background:#58a8e8;"></div>
<div class="a" style="left:1150px;top:634px;width:1px;height:20px;background:#58a8e8;"></div>
<div class="a" style="left:1241px;top:634px;width:1px;height:20px;background:#58a8e8;"></div>
<svg style="left:19px;top:637px" width="15" height="15" viewBox="0 0 15 15"><defs><radialGradient id="bg6" cx="0.4" cy="0.35" r="0.7"><stop offset="0" stop-color="#7fd0f8"/><stop offset="1" stop-color="#1a86c8"/></radialGradient></defs><path d="M0.5 0.5h7.5l3 3v9.5h-10.5z" fill="#fafafa" stroke="#555" stroke-width="0.9"/><path d="M8 0.5v3h3" fill="#fff" stroke="#555" stroke-width="0.8"/><circle cx="10.3" cy="11" r="3.4" fill="url(#bg6)" stroke="#15507a" stroke-width="0.8"/></svg>
<div class="t" style="left:37.5px;top:637.74px;font-size:12px;color:#fff;transform:scaleX(0.907);transform-origin:0 0">316686595</div>
<div class="t" style="right:1035.5px;top:637.74px;font-size:12px;color:#fff;transform:scaleX(0.907);transform-origin:100% 0">2025.10.15 12:09:54</div>
<div class="t" style="right:945px;top:637.74px;font-size:12px;color:#fff;">buy</div>
<div class="t" style="right:872px;top:637.74px;font-size:12px;color:#fff;transform:scaleX(0.907);transform-origin:100% 0">0.10</div>
<div class="t" style="right:781.5px;top:637.74px;font-size:12px;color:#fff;">gbpnzd</div>
<div class="t" style="right:691px;top:637.74px;font-size:12px;color:#fff;transform:scaleX(0.907);transform-origin:100% 0">2.33017</div>
<div class="t" style="right:599.5px;top:637.74px;font-size:12px;color:#fff;transform:scaleX(0.907);transform-origin:100% 0">0.00000</div>
<div class="t" style="right:508.5px;top:637.74px;font-size:12px;color:#fff;transform:scaleX(0.907);transform-origin:100% 0">0.00000</div>
<div class="t" style="right:308.5px;top:637.74px;font-size:12px;color:#fff;transform:scaleX(0.907);transform-origin:100% 0">2025.10.15 12:31:48</div>
<div class="t" style="right:218px;top:637.74px;font-size:12px;color:#fff;transform:scaleX(0.907);transform-origin:100% 0">2.33198</div>
<div class="t" style="right:126.5px;top:637.74px;font-size:12px;color:#fff;transform:scaleX(0.907);transform-origin:100% 0">0.00</div>
<div class="t" style="right:24.5px;top:637.74px;font-size:12px;color:#fff;transform:scaleX(0.907);transform-origin:100% 0">10.36</div>
<div class="a" style="left:16px;top:514px;width:1329px;height:1px;background:#d2d2d2;"></div>
<div class="a" style="left:16px;top:654px;width:1329px;height:20px;background:#c8c8c8;"></div>
<svg style="left:23px;top:660px" width="8" height="8" viewBox="0 0 8 8"><circle cx="4" cy="4" r="3.4" fill="#9a9a9a" stroke="#7a7a7a" stroke-width="0.8"/><circle cx="3.6" cy="3.6" r="1.6" fill="#c8c8c8"/></svg>
<div class="t" style="left:38.2px;top:658.14px;font-size:12px;color:#000;font-weight:bold;letter-spacing:-0.15px">Profit/Loss: 89.86&nbsp; Credit: 0.00&nbsp; Deposit: 0.00&nbsp; Withdrawal: 0.00</div>
<div class="t" style="right:25px;top:658.14px;font-size:12px;color:#000;font-weight:bold;transform:scaleX(0.93);transform-origin:100% 0">89.86</div>
<div class="a" style="left:16px;top:674px;width:1329px;height:5px;background:#fff;"></div>
<div class="a" style="left:1345px;top:490px;width:18px;height:184px;background:#f0f0f0;"></div>
<svg style="left:1350px;top:496px" width="8" height="6" viewBox="0 0 8 6"><path d="M0.8 5L4 1.6 7.2 5" fill="none" stroke="#606060" stroke-width="1.9"/></svg>
<div class="a" style="left:1346px;top:631px;width:15px;height:30px;background:#cdcdcd;"></div>
<svg style="left:1350px;top:667px" width="8" height="6" viewBox="0 0 8 6"><path d="M0.8 1L4 4.4 7.2 1" fill="none" stroke="#606060" stroke-width="1.9"/></svg>
<div class="a" style="left:1363px;top:489px;width:1px;height:215px;background:#dcdcdc;"></div>
<div class="a" style="left:15px;top:679px;width:1347px;height:1px;background:#000;"></div>
<div class="a" style="left:135px;top:679px;width:106px;height:20px;background:#fff;border:1.5px solid #000;border-top:none"></div>
<div class="a" style="left:16px;top:680px;width:119px;height:23px;background:#f0f0f0;"></div>
<div class="a" style="left:134.5px;top:679px;width:106.5px;height:20px;background:#fff;border-left:1.5px solid #000;border-right:1.5px solid #000;border-bottom:1.5px solid #000"></div>
<div class="t" style="left:27.4px;top:682.64px;font-size:12px;color:#6d6d6d;">Trade</div>
<div class="t" style="left:76.9px;top:682.64px;font-size:12px;color:#6d6d6d;">Exposure</div>
<div class="t" style="left:250.6px;top:682.64px;font-size:12px;color:#6d6d6d;">News</div>
<div class="t" style="left:312.0px;top:682.64px;font-size:12px;color:#6d6d6d;">Alerts</div>
<div class="t" style="left:361.79999999999995px;top:682.64px;font-size:12px;color:#6d6d6d;">Mailbox</div>
<div class="t" style="left:432.0px;top:682.64px;font-size:12px;color:#6d6d6d;">Market</div>
<div class="t" style="left:488.79999999999995px;top:682.64px;font-size:12px;color:#6d6d6d;">Signals</div>
<div class="t" style="left:546.1999999999999px;top:682.64px;font-size:12px;color:#6d6d6d;">Articles</div>
<div class="t" style="left:605.1999999999999px;top:682.64px;font-size:12px;color:#6d6d6d;">Code Base</div>
<div class="t" style="left:680.1px;top:682.64px;font-size:12px;color:#6d6d6d;">Experts</div>
<div class="t" style="left:737.5px;top:682.64px;font-size:12px;color:#6d6d6d;">Journal</div>
<div class="t" style="left:144.9px;top:682.64px;font-size:12px;color:#000;">Account History</div>
<div class="t" style="left:281.8px;top:688.43px;font-size:10px;color:#d42a2a;letter-spacing:-0.2px">33</div>
<div class="t" style="left:406.8px;top:688.43px;font-size:10px;color:#d42a2a;">7</div>
<div class="a" style="left:66px;top:683px;width:1px;height:13px;background:#555;"></div>
<div class="a" style="left:303px;top:683px;width:1px;height:13px;background:#555;"></div>
<div class="a" style="left:353px;top:683px;width:1px;height:13px;background:#555;"></div>
<div class="a" style="left:422px;top:683px;width:1px;height:13px;background:#555;"></div>
<div class="a" style="left:480px;top:683px;width:1px;height:13px;background:#555;"></div>
<div class="a" style="left:537px;top:683px;width:1px;height:13px;background:#555;"></div>
<div class="a" style="left:596px;top:683px;width:1px;height:13px;background:#555;"></div>
<div class="a" style="left:671px;top:683px;width:1px;height:13px;background:#555;"></div>
<div class="a" style="left:728px;top:683px;width:1px;height:13px;background:#555;"></div>
<div class="a" style="left:786px;top:683px;width:1px;height:13px;background:#555;"></div>
<div class="a" style="left:0px;top:703px;width:1366px;height:1px;background:#c8c8c8;"></div>
<div class="a" style="left:0px;top:704px;width:1366px;height:24px;background:#f0f0f0;"></div>
<div class="a" style="left:0px;top:704px;width:1366px;height:1px;background:#a8a8a8;"></div>
<div class="t" style="left:2.6px;top:711.74px;font-size:12px;color:#000;transform:scaleX(0.92);transform-origin:0 0">For Help, press F1</div>
<div class="a" style="left:672px;top:707px;width:1px;height:21px;background:#b8b8b8;"></div>
<div class="a" style="left:788px;top:707px;width:1px;height:21px;background:#b8b8b8;"></div>
<div class="a" style="left:890px;top:707px;width:1px;height:21px;background:#b8b8b8;"></div>
<div class="a" style="left:962px;top:707px;width:1px;height:21px;background:#b8b8b8;"></div>
<div class="a" style="left:1032px;top:707px;width:1px;height:21px;background:#b8b8b8;"></div>
<div class="a" style="left:1100px;top:707px;width:1px;height:21px;background:#b8b8b8;"></div>
<div class="a" style="left:1170px;top:707px;width:1px;height:21px;background:#b8b8b8;"></div>
<div class="a" style="left:1236px;top:707px;width:1px;height:21px;background:#b8b8b8;"></div>
<div class="t" style="left:678.4px;top:711.74px;font-size:12px;color:#000;">Default</div>
<div class="t" style="left:794px;top:711.74px;font-size:12px;color:#000;transform:scaleX(0.9);transform-origin:0 0">2025.10.10 01:00</div>
<div class="t" style="left:896px;top:711.74px;font-size:12px;color:#000;transform:scaleX(0.9);transform-origin:0 0">O: 1.15632</div>
<div class="t" style="left:967.5px;top:711.74px;font-size:12px;color:#000;transform:scaleX(0.9);transform-origin:0 0">H: 1.15661</div>
<div class="t" style="left:1038.5px;top:711.74px;font-size:12px;color:#000;transform:scaleX(0.9);transform-origin:0 0">L: 1.15612</div>
<div class="t" style="left:1106px;top:711.74px;font-size:12px;color:#000;transform:scaleX(0.9);transform-origin:0 0">C: 1.15640</div>
<div class="t" style="left:1176.4px;top:711.74px;font-size:12px;color:#000;transform:scaleX(0.93);transform-origin:0 0">V: 351</div>
<svg style="left:1242px;top:711px" width="24" height="13" viewBox="0 0 24 13"><rect x="0" y="0" width="2" height="9" fill="#56680e"/><rect x="0" y="10" width="2" height="3" fill="#0b3446"/><rect x="3" y="0" width="2" height="8" fill="#56680e"/><rect x="3" y="9" width="2" height="4" fill="#0b3446"/><rect x="6" y="0" width="2" height="7" fill="#56680e"/><rect x="6" y="8" width="2" height="5" fill="#0b3446"/><rect x="9" y="0" width="2" height="6" fill="#56680e"/><rect x="9" y="7" width="2" height="6" fill="#0b3446"/><rect x="12" y="0" width="2" height="5" fill="#56680e"/><rect x="12" y="6" width="2" height="7" fill="#0b3446"/><rect x="15" y="0" width="2" height="4" fill="#56680e"/><rect x="15" y="5" width="2" height="8" fill="#0b3446"/><rect x="18" y="0" width="2" height="3" fill="#56680e"/><rect x="18" y="4" width="2" height="9" fill="#0b3446"/><rect x="21" y="0" width="2" height="2" fill="#56680e"/><rect x="21" y="3" width="2" height="10" fill="#0b3446"/></svg>
<div class="t" style="left:1269px;top:711.74px;font-size:12px;color:#000;transform:scaleX(0.93);transform-origin:0 0">29357/461 kb</div>
</body></html>
